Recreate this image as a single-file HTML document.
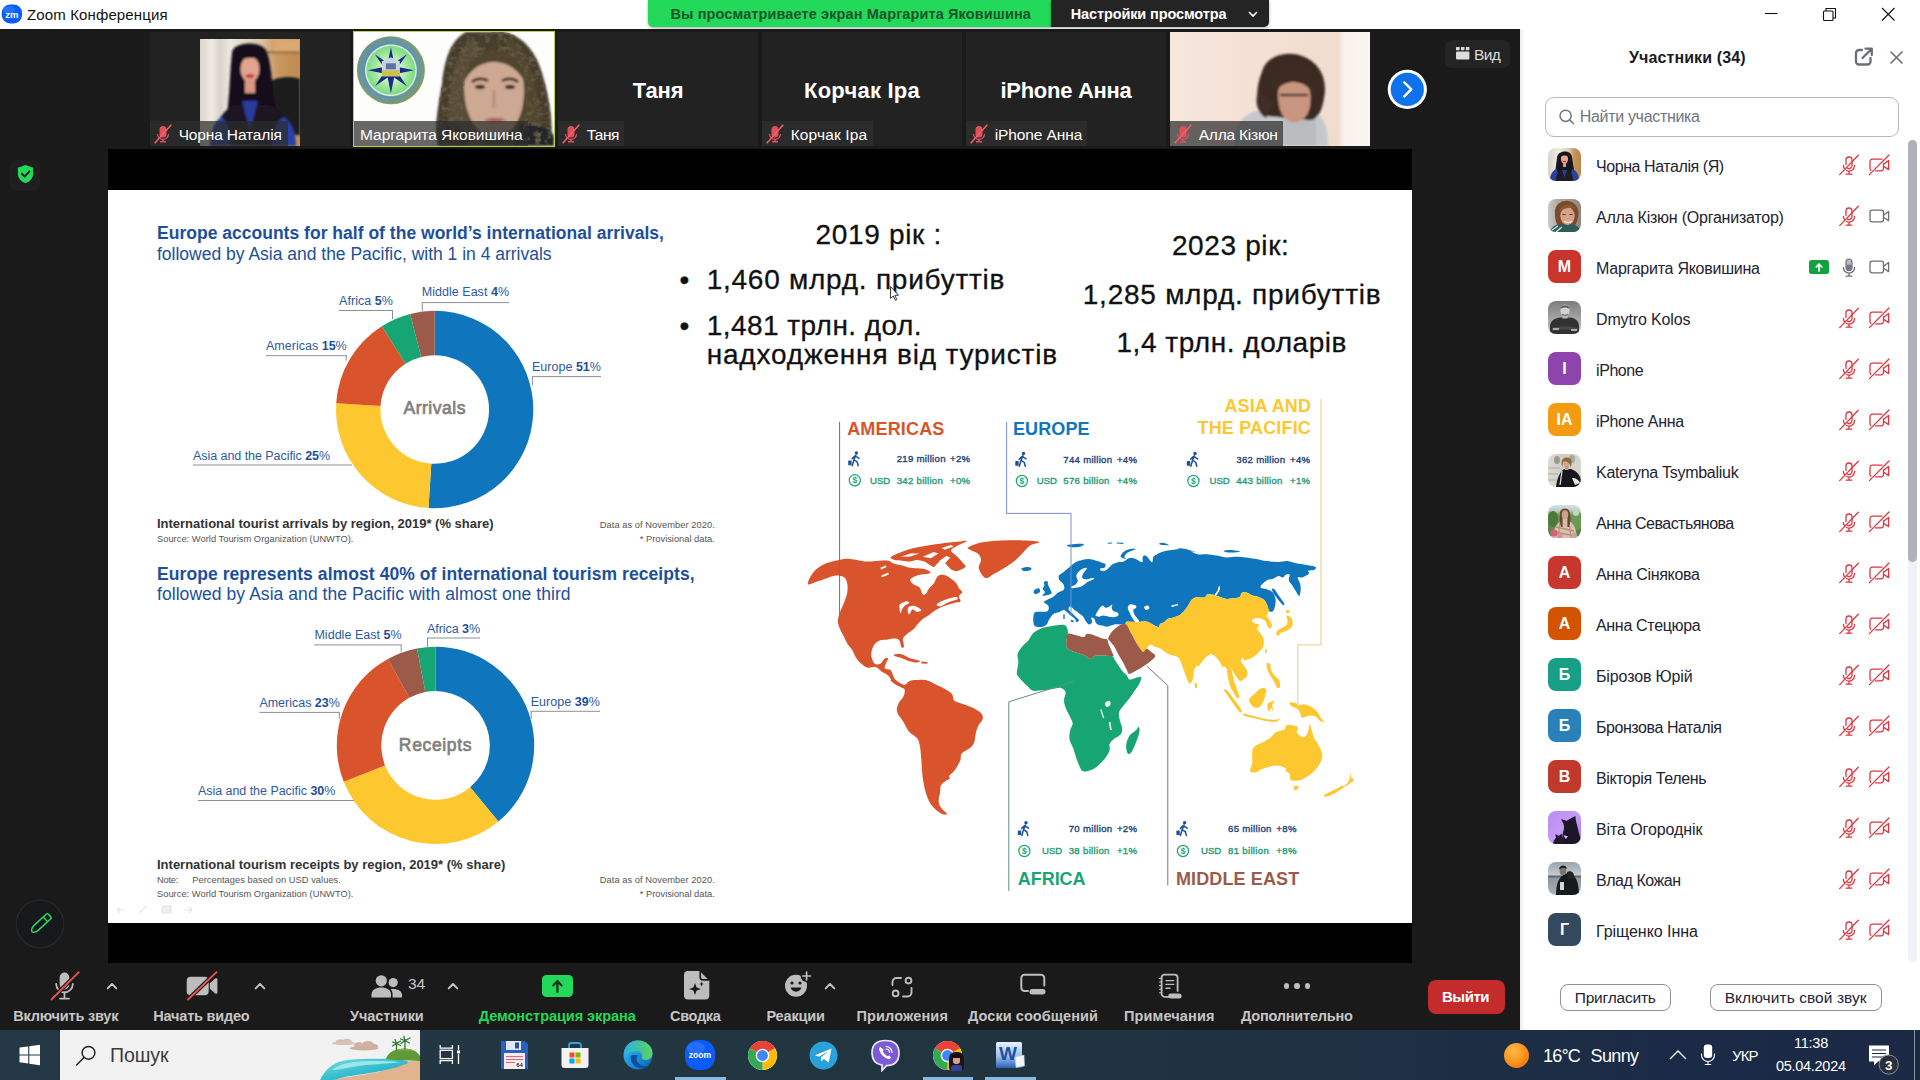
<!DOCTYPE html>
<html lang="ru"><head><meta charset="utf-8"><title>Zoom Конференция</title>
<style>
*{box-sizing:border-box;margin:0;padding:0}
html,body{width:1920px;height:1080px;overflow:hidden;background:#1a1a1a;font-family:"Liberation Sans",sans-serif;}
#root{position:relative;width:1920px;height:1080px;overflow:hidden}
#root div,#root svg{position:absolute}
.t{white-space:nowrap}
.tile{top:32px;height:114px;width:200px;background:#222;overflow:hidden}
.lbl{left:0;top:89px;height:25px;background:rgba(44,44,44,.72)}
.lbl.e{background:#2b2b2b}
.av{width:33px;height:33px;border-radius:8px;overflow:hidden;color:#fff;font-weight:bold;font-size:16px;line-height:33px;text-align:center}
</style></head><body><div id="root">
<div style="left:0px;top:0px;width:1920px;height:29px;background:#fff;"></div>
<div style="left:108px;top:149px;width:1304px;height:814px;background:#000;"></div>
<div style="left:108px;top:190px;width:1304px;height:733px;background:#fff;"></div>
<div style="left:0px;top:1030px;width:1920px;height:50px;background:linear-gradient(90deg,#233844 0%,#223642 30%,#203440 55%,#1e3043 72%,#1b2a46 88%,#1b2945 100%);"></div>
<div style="left:1520px;top:29px;width:400px;height:1001px;background:#fff;"></div>
<div style="left:1520px;top:29px;width:5px;height:1001px;background:linear-gradient(90deg,#ececec,#fff);"></div>
<svg style="left:1px;top:4px" width="22" height="20" viewBox="0 0 22 20"><rect x="0.7" y="0.5" width="20.4" height="19" rx="8.5" fill="#0b5cff"/><ellipse cx="8" cy="6" rx="6" ry="4" fill="#3f86ff" opacity=".5"/><text x="10.9" y="13.6" font-family="Liberation Sans,sans-serif" font-weight="bold" font-size="9.5" fill="#fff" text-anchor="middle">zm</text></svg>
<div class="t" style="left:27.0px;top:6.0px;font-size:15px;line-height:18px;color:#111;letter-spacing:0.130px;">Zoom Конференция</div>
<div style="left:648px;top:0px;width:403px;height:27px;background:#23d959;border-radius:0 0 0 5px;box-shadow:0 1px 3px rgba(0,0,0,.35)"></div>
<div style="left:1051px;top:0px;width:218px;height:27px;background:#242424;border-radius:0 0 5px 0;box-shadow:0 1px 3px rgba(0,0,0,.35)"></div>
<div class="t" style="left:670.5px;top:5.5px;font-size:14.5px;line-height:17px;color:#14552c;font-weight:bold;letter-spacing:0.110px;">Вы просматриваете экран Маргарита Яковишина</div>
<div class="t" style="left:1070.7px;top:5.5px;font-size:14.5px;line-height:17px;color:#fff;font-weight:bold;letter-spacing:-0.118px;">Настройки просмотра</div>
<svg style="left:1247px;top:9px" width="12" height="10" viewBox="0 0 12 10"><path d="M2 3 L6 7 L10 3" fill="none" stroke="#fff" stroke-width="1.6"/></svg>
<svg style="left:1760px;top:4px" width="140" height="22" viewBox="0 0 140 22"><g stroke="#111" stroke-width="1.1" fill="none"><path d="M5 9.5 H17.5"/><rect x="63.5" y="7" width="9.5" height="9.5" rx="1"/><path d="M66 7 V4.5 H75.5 V14 H73"/><path d="M122 4 L134.5 16.5 M134.5 4 L122 16.5"/></g></svg>
<div class="tile" style="left:150px;"><svg style="left:50px;top:7px" width="100" height="107" viewBox="0 0 100 107"><defs><filter id="b1" x="-5%" y="-5%" width="110%" height="110%"><feGaussianBlur stdDeviation="0.9"/></filter><linearGradient id="p1bg" x1="0" x2="1" y1="0" y2="0"><stop offset="0" stop-color="#dcd6cc"/><stop offset=".12" stop-color="#efebe4"/><stop offset=".2" stop-color="#d9d3c8"/><stop offset=".3" stop-color="#ece8e0"/><stop offset=".42" stop-color="#e2dacb"/><stop offset=".62" stop-color="#d9c0a0"/><stop offset=".78" stop-color="#c89860"/><stop offset="1" stop-color="#c08c52"/></linearGradient></defs><rect width="100" height="107" fill="url(#p1bg)"/><g filter="url(#b1)"><rect x="74" y="0" width="26" height="12" fill="#d9a873"/><rect x="62" y="12" width="38" height="3" fill="#a87a48"/><path d="M68 44 C74 38 92 36 100 40 V96 H70Z" fill="#1c1a1a"/><path d="M32 14 C32 2 66 0 68 16 C72 30 72 50 76 70 C78 84 70 92 60 92 H40 C28 92 26 80 28 66 C30 48 30 30 32 14Z" fill="#15111a"/><path d="M14 107 C14 84 22 72 34 66 H68 C82 70 92 84 94 107Z" fill="#1b1820"/><path d="M10 107 C10 92 14 82 22 78 C28 84 30 96 30 107Z M72 107 C72 94 76 82 84 78 C92 84 96 94 96 107Z" fill="#2b3fa6"/><path d="M42 62 L50 92 L58 62Z" fill="#2a3a9e"/><ellipse cx="50" cy="30" rx="9.5" ry="13" fill="#e0a48f"/><rect x="45" y="40" width="10" height="14" fill="#d69883"/><path d="M38 22 C42 10 58 10 62 22 C56 18 44 18 38 22Z" fill="#120e14"/><ellipse cx="50" cy="37" rx="4.5" ry="1.8" fill="#c4203a"/></g></svg><div class="lbl" style="width:138px"></div><svg style="left:2px;top:91px" width="22" height="22" viewBox="0 0 22 22"><rect x="7.500" y="3" width="7" height="11.500" rx="3.500" fill="#e0505a"/><path d="M5.500 11 a5.500 5.500 0 0 0 11 0" fill="none" stroke="#e0505a" stroke-width="1.300"/><path d="M11 16.500 V18.500 M8 18.800 H14" stroke="#e0505a" stroke-width="1.400"/><path d="M19.300 1.700 L2.700 20.300" stroke="#f0606a" stroke-width="1.500"/></svg><div class="t" style="left:28.7px;top:92.9px;font-size:15.5px;line-height:19px;color:#fff;letter-spacing:-0.151px;">Чорна Наталія</div></div>
<div class="tile" style="left:354px;outline:2px solid #b8d433;outline-offset:-1px;"><svg style="left:0;top:0" width="200" height="114" viewBox="0 0 200 114"><defs><filter id="b2" x="-5%" y="-5%" width="110%" height="110%"><feGaussianBlur stdDeviation="1.1"/></filter><filter id="b2s" x="-5%" y="-5%" width="110%" height="110%"><feGaussianBlur stdDeviation="0.5"/></filter><filter id="nz2" x="0" y="0" width="100%" height="100%"><feTurbulence type="fractalNoise" baseFrequency="0.16 0.2" numOctaves="2" seed="7" result="n"/><feColorMatrix in="n" type="matrix" values="0 0 0 0 0.12  0 0 0 0 0.1  0 0 0 0 0.06  0 0 0 -3.2 1.75"/><feComposite in2="SourceGraphic" operator="in"/></filter><radialGradient id="lg2"><stop offset="0" stop-color="#ffffff"/><stop offset=".25" stop-color="#d9f7cf"/><stop offset=".5" stop-color="#9fe89a"/><stop offset=".7" stop-color="#7fdc86"/><stop offset=".74" stop-color="#e8f4e0"/><stop offset=".78" stop-color="#5f93b0"/><stop offset=".9" stop-color="#6a97a8"/><stop offset=".96" stop-color="#7d9a62"/><stop offset="1" stop-color="#9aa878"/></radialGradient><linearGradient id="lg2b" x1="0" y1="0" x2="1" y2="1"><stop offset="0" stop-color="#4a7ec0" stop-opacity=".55"/><stop offset=".5" stop-color="#6a9a80" stop-opacity="0"/><stop offset="1" stop-color="#8a9a3a" stop-opacity=".55"/></linearGradient></defs><rect width="200" height="114" fill="#fdfdfc"/><g filter="url(#b2s)"><circle cx="36.900" cy="38.300" r="34" fill="url(#lg2)"/><path d="M36.900 4.300 a34 34 0 1 0 0.010 0Z M36.900 12.300 a26 26 0 1 1 -0.010 0Z" fill="url(#lg2b)" fill-rule="evenodd"/><g transform="translate(36.900 38.300)" fill="#1a2a8c"><path d="M0 -23 L3.500 -6 L0 0 L-3.500 -6Z M0 23 L3.500 6 L0 0 L-3.500 6Z M-23 0 L-6 -3.500 L0 0 L-6 3.500Z M23 0 L6 -3.500 L0 0 L6 3.500Z"/><path d="M-16 -16 L-1.500 -6 L-6 -1.500Z M16 -16 L1.500 -6 L6 -1.500Z M-16 16 L-1.500 6 L-6 1.500Z M16 16 L1.500 6 L6 1.500Z"/><path d="M-9 -9 L0 -13 L9 -9 L9 6 L-9 6Z" fill="#c8d4e0"/><rect x="-9" y="0" width="18" height="6" fill="#c9c44a"/><rect x="-5" y="-7" width="10" height="6" fill="#5a72a8"/></g></g><g filter="url(#b2)"><path d="M112 0 C96 8 90 30 88 52 C84 74 80 96 84 114 H196 C200 96 196 70 190 48 C184 22 170 4 150 0Z" fill="#463c2c"/><path d="M120 6 C104 16 98 40 96 60 C94 82 92 100 96 114 H130 V30Z" fill="#5a4e38"/><path d="M150 6 C170 12 178 36 182 58 C186 80 190 100 186 114 H158 V30Z" fill="#51462f"/><path d="M110 54 C110 30 124 22 140 22 C158 22 170 34 170 58 C170 84 160 104 140 106 C122 104 110 82 110 54Z" fill="#cda893"/><path d="M110 50 C112 28 126 18 142 18 C158 18 170 30 172 52 C164 36 152 30 140 30 C126 30 116 38 110 50Z" fill="#51452f"/><path d="M118 50 C122 46 130 46 134 49 M148 49 C152 46 160 46 164 50" stroke="#3d2f27" stroke-width="2.600" fill="none"/><ellipse cx="126" cy="55" rx="5" ry="2.200" fill="#3a2d28"/><ellipse cx="156" cy="55" rx="5" ry="2.200" fill="#3a2d28"/><path d="M140 58 V76" stroke="#b98f7c" stroke-width="3"/><path d="M130 88 C136 85 146 85 152 88 C146 91 136 91 130 88Z" fill="#a8625c"/><path d="M166 92 C180 90 196 96 200 104 V114 H160Z" fill="#23252c"/><path d="M90 96 C100 90 112 96 116 114 H86Z" fill="#3e3528"/></g><path filter="url(#nz2)" d="M112 0 C96 8 90 30 88 52 C84 74 80 96 84 114 H112 C108 90 108 60 112 44 C118 26 130 20 142 20 C158 20 168 30 172 50 C174 70 170 96 164 114 H196 C200 96 196 70 190 48 C184 22 170 4 150 0Z" fill="#000"/></svg><div class="lbl" style="width:174px"></div><div class="t" style="left:6.0px;top:92.9px;font-size:15.5px;line-height:19px;color:#fff;letter-spacing:-0.038px;">Маргарита Яковишина</div></div>
<div class="tile" style="left:558px;"><div class="t" style="left:74.8px;top:45.5px;font-size:22px;line-height:26px;color:#fff;font-weight:bold;letter-spacing:-0.188px;">Таня</div><div class="lbl e" style="width:66px"></div><svg style="left:2px;top:91px" width="22" height="22" viewBox="0 0 22 22"><rect x="7.500" y="3" width="7" height="11.500" rx="3.500" fill="#e0505a"/><path d="M5.500 11 a5.500 5.500 0 0 0 11 0" fill="none" stroke="#e0505a" stroke-width="1.300"/><path d="M11 16.500 V18.500 M8 18.800 H14" stroke="#e0505a" stroke-width="1.400"/><path d="M19.300 1.700 L2.700 20.300" stroke="#f0606a" stroke-width="1.500"/></svg><div class="t" style="left:28.7px;top:92.9px;font-size:15.5px;line-height:19px;color:#fff;letter-spacing:-0.586px;">Таня</div></div>
<div class="tile" style="left:762px;"><div class="t" style="left:42.0px;top:45.5px;font-size:22px;line-height:26px;color:#fff;font-weight:bold;letter-spacing:0.232px;">Корчак Іра</div><div class="lbl e" style="width:110.5px"></div><svg style="left:2px;top:91px" width="22" height="22" viewBox="0 0 22 22"><rect x="7.500" y="3" width="7" height="11.500" rx="3.500" fill="#e0505a"/><path d="M5.500 11 a5.500 5.500 0 0 0 11 0" fill="none" stroke="#e0505a" stroke-width="1.300"/><path d="M11 16.500 V18.500 M8 18.800 H14" stroke="#e0505a" stroke-width="1.400"/><path d="M19.300 1.700 L2.700 20.300" stroke="#f0606a" stroke-width="1.500"/></svg><div class="t" style="left:28.7px;top:92.9px;font-size:15.5px;line-height:19px;color:#fff;letter-spacing:0.124px;">Корчак Іра</div></div>
<div class="tile" style="left:966px;"><div class="t" style="left:34.5px;top:45.5px;font-size:22px;line-height:26px;color:#fff;font-weight:bold;letter-spacing:-0.286px;">iPhone Анна</div><div class="lbl e" style="width:120.5px"></div><svg style="left:2px;top:91px" width="22" height="22" viewBox="0 0 22 22"><rect x="7.500" y="3" width="7" height="11.500" rx="3.500" fill="#e0505a"/><path d="M5.500 11 a5.500 5.500 0 0 0 11 0" fill="none" stroke="#e0505a" stroke-width="1.300"/><path d="M11 16.500 V18.500 M8 18.800 H14" stroke="#e0505a" stroke-width="1.400"/><path d="M19.300 1.700 L2.700 20.300" stroke="#f0606a" stroke-width="1.500"/></svg><div class="t" style="left:28.7px;top:92.9px;font-size:15.5px;line-height:19px;color:#fff;letter-spacing:-0.104px;">iPhone Анна</div></div>
<div class="tile" style="left:1170px;"><svg style="left:0;top:0" width="200" height="114" viewBox="0 0 200 114"><defs><filter id="b6" x="-5%" y="-5%" width="110%" height="110%"><feGaussianBlur stdDeviation="1.2"/></filter><linearGradient id="p6bg" x1="0" x2="1" y1="0" y2="0"><stop offset="0" stop-color="#f6e6dc"/><stop offset=".5" stop-color="#f3e0d4"/><stop offset=".84" stop-color="#f0dccf"/><stop offset=".87" stop-color="#f9f1eb"/><stop offset="1" stop-color="#fbf6f2"/></linearGradient></defs><rect width="200" height="114" fill="url(#p6bg)"/><g filter="url(#b6)"><path d="M64 114 C64 92 74 80 92 78 H140 C154 82 158 96 158 114Z" fill="#c6c9cb"/><path d="M112 86 H146 V114 H112Z" fill="#babdc0"/><path d="M92 40 C96 24 116 18 132 24 C150 30 158 48 154 66 C152 80 146 90 138 88 L96 84 C84 74 86 54 92 40Z" fill="#3a2a22"/><path d="M108 62 C108 50 118 46 128 48 C140 50 142 62 140 74 C138 86 130 92 122 90 C112 88 108 76 108 62Z" fill="#c9957f"/><path d="M100 44 C108 30 130 28 142 40 C148 50 146 58 142 60 C134 48 118 46 106 58 C100 56 98 50 100 44Z" fill="#3d2c24"/><path d="M110 63 H138" stroke="#4a3530" stroke-width="2.400"/><path d="M88 60 C84 70 88 82 96 86 L104 70Z" fill="#402e26"/></g></svg><div class="lbl" style="width:112.5px"></div><svg style="left:2px;top:91px" width="22" height="22" viewBox="0 0 22 22"><rect x="7.500" y="3" width="7" height="11.500" rx="3.500" fill="#e0505a"/><path d="M5.500 11 a5.500 5.500 0 0 0 11 0" fill="none" stroke="#e0505a" stroke-width="1.300"/><path d="M11 16.500 V18.500 M8 18.800 H14" stroke="#e0505a" stroke-width="1.400"/><path d="M19.300 1.700 L2.700 20.300" stroke="#f0606a" stroke-width="1.500"/></svg><div class="t" style="left:28.7px;top:92.9px;font-size:15.5px;line-height:19px;color:#fff;letter-spacing:-0.212px;">Алла Кізюн</div></div>
<svg style="left:1386px;top:68px" width="42" height="42" viewBox="0 0 42 42"><circle cx="21.3" cy="21.4" r="19.6" fill="#fff"/><circle cx="21.3" cy="21.4" r="16.6" fill="#0e72ed"/><path d="M18.3 14.4 L25.3 21.4 L18.3 28.4" fill="none" stroke="#fff" stroke-width="2.4" stroke-linecap="round" stroke-linejoin="round"/></svg>
<div style="left:1445px;top:39.5px;width:65px;height:28.5px;background:#242424;border-radius:7px"></div>
<svg style="left:1456px;top:46px" width="14" height="14" viewBox="0 0 14 14"><g fill="#ddd"><rect x="0" y="1" width="3.6" height="3.2" rx=".6"/><rect x="4.9" y="1" width="3.6" height="3.2" rx=".6"/><rect x="9.8" y="1" width="3.6" height="3.2" rx=".6"/><rect x="0" y="5.4" width="13.4" height="8" rx="1"/></g></svg>
<div class="t" style="left:1474.0px;top:44.5px;font-size:15.5px;line-height:19px;color:#ddd;letter-spacing:-0.680px;">Вид</div>
<div style="left:10px;top:160px;width:30px;height:31px;background:#1f1f1f;border-radius:7px"></div>
<svg style="left:15.500px;top:164px" width="19" height="20" viewBox="0 0 19 21"><path d="M9.5 1 L17.5 4 V10.5 C17.5 15 14 18.5 9.5 20 C5 18.5 1.5 15 1.5 10.5 V4 Z" fill="#23d959"/><path d="M5.8 10.3 L8.6 13.2 L13.6 7.8" fill="none" stroke="#1a1a1a" stroke-width="2" stroke-linecap="round" stroke-linejoin="round"/></svg>
<svg style="left:14px;top:898px" width="52" height="52" viewBox="0 0 52 52"><circle cx="26" cy="26" r="23.700" fill="#17181b" stroke="#27292c" stroke-width="1.100"/><g transform="translate(26.700 25.700) rotate(47.400)" fill="none" stroke="#2bd964" stroke-width="1.500" stroke-linejoin="round"><path d="M-2 -12 H2 a1.200 1.200 0 0 1 1.200 1.200 V6 C3.200 9.500 1.200 11.800 0 11.800 C-1.200 11.800 -3.200 9.500 -3.200 6 V-10.800 a1.200 1.200 0 0 1 1.200 -1.200Z"/><path d="M-3.200 -6.400 H3.200"/></g></svg>
<div class="t" style="left:1629.0px;top:48.1px;font-size:16px;line-height:19px;color:#1b1b26;font-weight:bold;letter-spacing:0.106px;">Участники (34)</div>
<svg style="left:1853px;top:46px" width="54" height="22" viewBox="0 0 54 22"><g fill="none" stroke="#696e76" stroke-width="2.300" stroke-linecap="round" stroke-linejoin="round"><path d="M9 4 H6 a3 3 0 0 0 -3 3 V15.5 a3 3 0 0 0 3 3 H14.5 a3 3 0 0 0 3 -3 V12"/><path d="M12.5 2.6 H18.8 V8.9 M18.5 3 L9.5 12"/></g><path d="M37.5 5.5 L49.5 17.5 M49.5 5.5 L37.5 17.5" stroke="#6a6a74" stroke-width="1.5" fill="none"/></svg>
<div style="left:1544.5px;top:97px;width:354.5px;height:40px;background:#fff;border:1.3px solid #b4b7c6;border-radius:9px"></div>
<svg style="left:1558px;top:108px" width="18" height="18" viewBox="0 0 18 18"><circle cx="7.6" cy="7.8" r="5.6" fill="none" stroke="#6e7680" stroke-width="1.5"/><path d="M11.8 12 L15.6 15.8" stroke="#6e7680" stroke-width="1.5" stroke-linecap="round"/></svg>
<div class="t" style="left:1579.7px;top:107.2px;font-size:16px;line-height:19px;color:#6e7680;letter-spacing:-0.312px;">Найти участника</div>
<div style="left:1907.5px;top:140px;width:9.2px;height:822px;background:#f1f1f8;border-radius:5px"></div>
<div style="left:1907.5px;top:140px;width:9.2px;height:422px;background:#b1b1ba;border-radius:5px"></div>
<div class="av" style="left:1548px;top:148px"><svg style="left:0;top:0" width="33" height="33" viewBox="0 0 33 33"><defs><filter id="fp1" x="-10%" y="-10%" width="120%" height="120%"><feGaussianBlur stdDeviation="0.55"/></filter></defs><defs><linearGradient id="ap1" x1="0" x2="1" y1="0" y2="0"><stop offset="0" stop-color="#d8d2c8"/><stop offset=".3" stop-color="#efece6"/><stop offset=".6" stop-color="#e0d2be"/><stop offset=".8" stop-color="#c49558"/><stop offset="1" stop-color="#b88748"/></linearGradient></defs><rect width="33" height="33" fill="url(#ap1)"/><g filter="url(#fp1)"><path d="M9 10 C9 2 23 1 24 9 C25 16 26 22 27 28 L24 33 H8 L6 28 C8 22 8 16 9 10Z" fill="#17121a"/><path d="M2 33 C2 26 5 22 9 21 L12 33Z M31 33 C31 26 28 22 24 21 L21 33Z" fill="#2c3f9f"/><path d="M8 33 C8 27 10 23 13 22 H20 C23 23 25 27 25 33Z" fill="#1d1a24"/><path d="M14 22 L16.500 30 L19 22Z" fill="#2a3a98"/><ellipse cx="16.500" cy="11" rx="3.600" ry="4.800" fill="#e2a690"/><rect x="15" y="15" width="3" height="4" fill="#d89a84"/><path d="M12 9 C13 4 20 4 21 9 C19 7 14 7 12 9Z" fill="#120e14"/><ellipse cx="16.500" cy="13.400" rx="1.700" ry=".7" fill="#c4203a"/></g></svg></div>
<div class="t" style="left:1596.0px;top:156.5px;font-size:16px;line-height:19px;color:#232333;letter-spacing:-0.429px;">Чорна Наталія (Я)</div>
<svg style="left:1838px;top:154px" width="22" height="22" viewBox="-11 -11 22 22"><g fill="none" stroke="#e0353f" stroke-width="1.3" stroke-linecap="round"><path d="M-3 -0.5 V-5 a3 3 0 0 1 6 0 V0.5 a3 3 0 0 1 -4.5 2.6"/><path d="M-5.6 0.5 a5.6 5.6 0 0 0 1.6 3.6 M5.6 0.5 a5.6 5.6 0 0 1 -8 5"/><path d="M0 6.3 V9 M-2.8 9.2 H2.8"/><path d="M9.3 -9.8 L-9.3 9.6"/></g></svg>
<svg style="left:1867px;top:154px" width="24" height="22" viewBox="-12 -11 24 22"><g fill="none" stroke="#e0353f" stroke-width="1.3" stroke-linejoin="round" stroke-linecap="round"><path d="M3 -5.8 H-6.8 a2.2 2.2 0 0 0 -2.2 2.2 V3.6 a2.2 2.2 0 0 0 0.8 1.7 M-3.5 5.8 H2.3 a2.2 2.2 0 0 0 2.2 -2.2 V-1"/><path d="M4.6 -0.8 L9.6 -4.6 V4.6 L4.6 1.2"/><path d="M10 -10 L-9.6 9.6"/></g></svg>
<div class="av" style="left:1548px;top:199px"><svg style="left:0;top:0" width="33" height="33" viewBox="0 0 33 33"><defs><filter id="fp2" x="-10%" y="-10%" width="120%" height="120%"><feGaussianBlur stdDeviation="0.6"/></filter></defs><defs><linearGradient id="ap2" x1="0" x2="1" y1="0" y2="0"><stop offset="0" stop-color="#c9c9c7"/><stop offset=".4" stop-color="#a9a49c"/><stop offset="1" stop-color="#8c857a"/></linearGradient></defs><rect width="33" height="33" fill="url(#ap2)"/><g filter="url(#fp2)"><path d="M7 14 C6 6 14 1 20 2 C28 3 32 10 30 18 C29 24 27 27 24 28 H11 C8 25 7 20 7 14Z" fill="#7a4c2a"/><path d="M2 33 C3 28 8 25 13 25 H24 C29 26 32 29 33 33Z" fill="#2f5a58"/><path d="M4 31 L10 27 M8 33 L14 28" stroke="#e8efee" stroke-width="1.200"/><ellipse cx="19.500" cy="17" rx="7.200" ry="9" fill="#d9a286"/><path d="M11 13 C12 5 24 3 28 10 C24 8 17 8 11 13Z" fill="#8a5a30"/><path d="M16 22 C18 24 22 24 24 22" stroke="#f4ece6" stroke-width="1.200" fill="none"/><path d="M14.500 15.500 H17.500 M21.500 15.500 H24.500" stroke="#4a3020" stroke-width="1"/></g></svg></div>
<div class="t" style="left:1596.0px;top:207.5px;font-size:16px;line-height:19px;color:#232333;letter-spacing:-0.228px;">Алла Кізюн (Организатор)</div>
<svg style="left:1838px;top:205px" width="22" height="22" viewBox="-11 -11 22 22"><g fill="none" stroke="#e0353f" stroke-width="1.3" stroke-linecap="round"><path d="M-3 -0.5 V-5 a3 3 0 0 1 6 0 V0.5 a3 3 0 0 1 -4.5 2.6"/><path d="M-5.6 0.5 a5.6 5.6 0 0 0 1.6 3.6 M5.6 0.5 a5.6 5.6 0 0 1 -8 5"/><path d="M0 6.3 V9 M-2.8 9.2 H2.8"/><path d="M9.3 -9.8 L-9.3 9.6"/></g></svg>
<svg style="left:1867px;top:205px" width="24" height="22" viewBox="-12 -11 24 22"><g fill="none" stroke="#6e6e7a" stroke-width="1.3" stroke-linejoin="round"><rect x="-9" y="-5.8" width="13.5" height="11.6" rx="2.2"/><path d="M4.6 -0.8 L9.6 -4.6 V4.6 L4.6 1.2"/></g></svg>
<div class="av" style="left:1548px;top:250px;background:#c9352b">M</div>
<div class="t" style="left:1596.0px;top:258.5px;font-size:16px;line-height:19px;color:#232333;letter-spacing:-0.263px;">Маргарита Яковишина</div>
<svg style="left:1838px;top:256px" width="22" height="22" viewBox="-11 -11 22 22"><rect x="-3" y="-8" width="6" height="11.6" rx="3" fill="#b9b9c2" stroke="#6e6e7a" stroke-width="1.2"/><rect x="-3" y="-2.6" width="6" height="6.2" rx="2.6" fill="#77778a"/><g fill="none" stroke="#6e6e7a" stroke-width="1.3" stroke-linecap="round"><path d="M-5.6 0.5 a5.6 5.6 0 0 0 11.2 0"/><path d="M0 6.3 V9 M-2.8 9.2 H2.8"/></g></svg>
<svg style="left:1867px;top:256px" width="24" height="22" viewBox="-12 -11 24 22"><g fill="none" stroke="#6e6e7a" stroke-width="1.3" stroke-linejoin="round"><rect x="-9" y="-5.8" width="13.5" height="11.6" rx="2.2"/><path d="M4.6 -0.8 L9.6 -4.6 V4.6 L4.6 1.2"/></g></svg>
<div class="av" style="left:1548px;top:301px"><svg style="left:0;top:0" width="33" height="33" viewBox="0 0 33 33"><defs><filter id="fp4" x="-10%" y="-10%" width="120%" height="120%"><feGaussianBlur stdDeviation="0.55"/></filter></defs><defs><linearGradient id="ap4" x1="0" x2="0" y1="0" y2="1"><stop offset="0" stop-color="#7d7d7d"/><stop offset=".6" stop-color="#a9a9a9"/><stop offset="1" stop-color="#c2c2c2"/></linearGradient></defs><rect width="33" height="33" fill="url(#ap4)"/><g filter="url(#fp4)"><path d="M2 33 V24 C3 19 8 17 12 16.500 H22 C27 17 31 20 31 25 V33Z" fill="#333"/><path d="M4 27 C10 25 24 25 30 27 V30 C24 28 10 28 4 30Z" fill="#4a4a4a"/><path d="M5 28 H11 M23 29 H29" stroke="#cfcfcf" stroke-width="1.600"/><ellipse cx="17" cy="9.500" rx="4.600" ry="6" fill="#d2d2d2"/><rect x="14.500" y="14" width="5" height="3.500" fill="#bdbdbd"/><path d="M12.500 8 C13 3 21 3 21.500 8 C19 6 15 6 12.500 8Z" fill="#5a5a5a"/><path d="M14 13 C16 15 18 15 20 13" stroke="#777" stroke-width="1.400" fill="none"/></g></svg></div>
<div class="t" style="left:1596.0px;top:309.5px;font-size:16px;line-height:19px;color:#232333;letter-spacing:-0.135px;">Dmytro Kolos</div>
<svg style="left:1838px;top:307px" width="22" height="22" viewBox="-11 -11 22 22"><g fill="none" stroke="#e0353f" stroke-width="1.3" stroke-linecap="round"><path d="M-3 -0.5 V-5 a3 3 0 0 1 6 0 V0.5 a3 3 0 0 1 -4.5 2.6"/><path d="M-5.6 0.5 a5.6 5.6 0 0 0 1.6 3.6 M5.6 0.5 a5.6 5.6 0 0 1 -8 5"/><path d="M0 6.3 V9 M-2.8 9.2 H2.8"/><path d="M9.3 -9.8 L-9.3 9.6"/></g></svg>
<svg style="left:1867px;top:307px" width="24" height="22" viewBox="-12 -11 24 22"><g fill="none" stroke="#e0353f" stroke-width="1.3" stroke-linejoin="round" stroke-linecap="round"><path d="M3 -5.8 H-6.8 a2.2 2.2 0 0 0 -2.2 2.2 V3.6 a2.2 2.2 0 0 0 0.8 1.7 M-3.5 5.8 H2.3 a2.2 2.2 0 0 0 2.2 -2.2 V-1"/><path d="M4.6 -0.8 L9.6 -4.6 V4.6 L4.6 1.2"/><path d="M10 -10 L-9.6 9.6"/></g></svg>
<div class="av" style="left:1548px;top:352px;background:#8e44ad">I</div>
<div class="t" style="left:1596.0px;top:360.5px;font-size:16px;line-height:19px;color:#232333;letter-spacing:-0.420px;">iPhone</div>
<svg style="left:1838px;top:358px" width="22" height="22" viewBox="-11 -11 22 22"><g fill="none" stroke="#e0353f" stroke-width="1.3" stroke-linecap="round"><path d="M-3 -0.5 V-5 a3 3 0 0 1 6 0 V0.5 a3 3 0 0 1 -4.5 2.6"/><path d="M-5.6 0.5 a5.6 5.6 0 0 0 1.6 3.6 M5.6 0.5 a5.6 5.6 0 0 1 -8 5"/><path d="M0 6.3 V9 M-2.8 9.2 H2.8"/><path d="M9.3 -9.8 L-9.3 9.6"/></g></svg>
<svg style="left:1867px;top:358px" width="24" height="22" viewBox="-12 -11 24 22"><g fill="none" stroke="#e0353f" stroke-width="1.3" stroke-linejoin="round" stroke-linecap="round"><path d="M3 -5.8 H-6.8 a2.2 2.2 0 0 0 -2.2 2.2 V3.6 a2.2 2.2 0 0 0 0.8 1.7 M-3.5 5.8 H2.3 a2.2 2.2 0 0 0 2.2 -2.2 V-1"/><path d="M4.6 -0.8 L9.6 -4.6 V4.6 L4.6 1.2"/><path d="M10 -10 L-9.6 9.6"/></g></svg>
<div class="av" style="left:1548px;top:403px;background:#f39c12">IA</div>
<div class="t" style="left:1596.0px;top:411.5px;font-size:16px;line-height:19px;color:#232333;letter-spacing:-0.346px;">iPhone Анна</div>
<svg style="left:1838px;top:409px" width="22" height="22" viewBox="-11 -11 22 22"><g fill="none" stroke="#e0353f" stroke-width="1.3" stroke-linecap="round"><path d="M-3 -0.5 V-5 a3 3 0 0 1 6 0 V0.5 a3 3 0 0 1 -4.5 2.6"/><path d="M-5.6 0.5 a5.6 5.6 0 0 0 1.6 3.6 M5.6 0.5 a5.6 5.6 0 0 1 -8 5"/><path d="M0 6.3 V9 M-2.8 9.2 H2.8"/><path d="M9.3 -9.8 L-9.3 9.6"/></g></svg>
<svg style="left:1867px;top:409px" width="24" height="22" viewBox="-12 -11 24 22"><g fill="none" stroke="#e0353f" stroke-width="1.3" stroke-linejoin="round" stroke-linecap="round"><path d="M3 -5.8 H-6.8 a2.2 2.2 0 0 0 -2.2 2.2 V3.6 a2.2 2.2 0 0 0 0.8 1.7 M-3.5 5.8 H2.3 a2.2 2.2 0 0 0 2.2 -2.2 V-1"/><path d="M4.6 -0.8 L9.6 -4.6 V4.6 L4.6 1.2"/><path d="M10 -10 L-9.6 9.6"/></g></svg>
<div class="av" style="left:1548px;top:454px"><svg style="left:0;top:0" width="33" height="33" viewBox="0 0 33 33"><defs><filter id="fp7" x="-10%" y="-10%" width="120%" height="120%"><feGaussianBlur stdDeviation="0.55"/></filter></defs><defs><linearGradient id="ap7" x1="0" x2="1" y1="0" y2="0"><stop offset="0" stop-color="#dedad2"/><stop offset=".5" stop-color="#cfccc4"/><stop offset="1" stop-color="#d9d6d0"/></linearGradient></defs><rect width="33" height="33" fill="url(#ap7)"/><g filter="url(#fp7)"><ellipse cx="9" cy="6" rx="3" ry="4" fill="#9a9a92"/><ellipse cx="24" cy="5" rx="3" ry="4" fill="#a8a8a0"/><path d="M0 14 H12 M0 20 H10 M0 26 H9" stroke="#bdb9b0" stroke-width="1.400"/><path d="M8 33 C9 24 12 18 16 15 H23 C29 17 33 22 33 28 V33Z" fill="#15161a"/><path d="M24 24 C28 24 31 26 32 29 L27 31Z" fill="#e8e6e2"/><path d="M14 17 L12 31" stroke="#dcdad6" stroke-width="1.300"/><ellipse cx="18.500" cy="8.500" rx="3.600" ry="4.600" fill="#d0a888"/><rect x="17" y="12" width="3.500" height="4" fill="#c49c7c"/><path d="M13.500 9 C13 3 22 1 23.500 7 C24 10 23 12 22.500 13 C22 8 17 6 15 8 C14.500 10 14.500 12 14.500 13 C13.800 12 13.500 10 13.500 9Z" fill="#8a6a44"/></g></svg></div>
<div class="t" style="left:1596.0px;top:462.5px;font-size:16px;line-height:19px;color:#232333;letter-spacing:-0.254px;">Kateryna Tsymbaliuk</div>
<svg style="left:1838px;top:460px" width="22" height="22" viewBox="-11 -11 22 22"><g fill="none" stroke="#e0353f" stroke-width="1.3" stroke-linecap="round"><path d="M-3 -0.5 V-5 a3 3 0 0 1 6 0 V0.5 a3 3 0 0 1 -4.5 2.6"/><path d="M-5.6 0.5 a5.6 5.6 0 0 0 1.6 3.6 M5.6 0.5 a5.6 5.6 0 0 1 -8 5"/><path d="M0 6.3 V9 M-2.8 9.2 H2.8"/><path d="M9.3 -9.8 L-9.3 9.6"/></g></svg>
<svg style="left:1867px;top:460px" width="24" height="22" viewBox="-12 -11 24 22"><g fill="none" stroke="#e0353f" stroke-width="1.3" stroke-linejoin="round" stroke-linecap="round"><path d="M3 -5.8 H-6.8 a2.2 2.2 0 0 0 -2.2 2.2 V3.6 a2.2 2.2 0 0 0 0.8 1.7 M-3.5 5.8 H2.3 a2.2 2.2 0 0 0 2.2 -2.2 V-1"/><path d="M4.6 -0.8 L9.6 -4.6 V4.6 L4.6 1.2"/><path d="M10 -10 L-9.6 9.6"/></g></svg>
<div class="av" style="left:1548px;top:505px"><svg style="left:0;top:0" width="33" height="33" viewBox="0 0 33 33"><defs><filter id="fp8" x="-10%" y="-10%" width="120%" height="120%"><feGaussianBlur stdDeviation="0.6"/></filter></defs><defs><linearGradient id="ap8" x1="0" x2="0" y1="0" y2="1"><stop offset="0" stop-color="#d4e2ea"/><stop offset=".18" stop-color="#b9cdbf"/><stop offset=".3" stop-color="#6f9655"/><stop offset="1" stop-color="#557a40"/></linearGradient></defs><rect width="33" height="33" fill="url(#ap8)"/><g filter="url(#fp8)"><ellipse cx="5" cy="14" rx="5" ry="8" fill="#4a7a3a"/><ellipse cx="29" cy="16" rx="5" ry="9" fill="#6a9a54"/><ellipse cx="28" cy="8" rx="3" ry="3" fill="#c9d2c8"/><path d="M4 33 C5 24 9 18 13 16 H21 C26 18 28 24 29 33Z" fill="#d9c2ae"/><path d="M8 22 L26 26 M7 27 L27 31 M12 17 L10 33 M21 17 L23 33" stroke="#b8907a" stroke-width="1.300"/><path d="M12 9 C11 3 21 1 22 8 C23 14 22 19 21 22 H13 C12 19 11.500 14 12 9Z" fill="#6a4a30"/><path d="M14.600 12 H19.400 V22 H14.600Z" fill="#d6bca8"/><ellipse cx="17" cy="9.500" rx="3.200" ry="4.300" fill="#cfa288"/><circle cx="6" cy="28" r="3.500" fill="#d8607a"/><circle cx="12" cy="31" r="2.500" fill="#e28a9a"/><circle cx="26" cy="30" r="2.500" fill="#c9a0a8"/></g></svg></div>
<div class="t" style="left:1596.0px;top:513.5px;font-size:16px;line-height:19px;color:#232333;letter-spacing:-0.526px;">Анна Севастьянова</div>
<svg style="left:1838px;top:511px" width="22" height="22" viewBox="-11 -11 22 22"><g fill="none" stroke="#e0353f" stroke-width="1.3" stroke-linecap="round"><path d="M-3 -0.5 V-5 a3 3 0 0 1 6 0 V0.5 a3 3 0 0 1 -4.5 2.6"/><path d="M-5.6 0.5 a5.6 5.6 0 0 0 1.6 3.6 M5.6 0.5 a5.6 5.6 0 0 1 -8 5"/><path d="M0 6.3 V9 M-2.8 9.2 H2.8"/><path d="M9.3 -9.8 L-9.3 9.6"/></g></svg>
<svg style="left:1867px;top:511px" width="24" height="22" viewBox="-12 -11 24 22"><g fill="none" stroke="#e0353f" stroke-width="1.3" stroke-linejoin="round" stroke-linecap="round"><path d="M3 -5.8 H-6.8 a2.2 2.2 0 0 0 -2.2 2.2 V3.6 a2.2 2.2 0 0 0 0.8 1.7 M-3.5 5.8 H2.3 a2.2 2.2 0 0 0 2.2 -2.2 V-1"/><path d="M4.6 -0.8 L9.6 -4.6 V4.6 L4.6 1.2"/><path d="M10 -10 L-9.6 9.6"/></g></svg>
<div class="av" style="left:1548px;top:556px;background:#c8372d">А</div>
<div class="t" style="left:1596.0px;top:564.5px;font-size:16px;line-height:19px;color:#232333;letter-spacing:-0.307px;">Анна Сінякова</div>
<svg style="left:1838px;top:562px" width="22" height="22" viewBox="-11 -11 22 22"><g fill="none" stroke="#e0353f" stroke-width="1.3" stroke-linecap="round"><path d="M-3 -0.5 V-5 a3 3 0 0 1 6 0 V0.5 a3 3 0 0 1 -4.5 2.6"/><path d="M-5.6 0.5 a5.6 5.6 0 0 0 1.6 3.6 M5.6 0.5 a5.6 5.6 0 0 1 -8 5"/><path d="M0 6.3 V9 M-2.8 9.2 H2.8"/><path d="M9.3 -9.8 L-9.3 9.6"/></g></svg>
<svg style="left:1867px;top:562px" width="24" height="22" viewBox="-12 -11 24 22"><g fill="none" stroke="#e0353f" stroke-width="1.3" stroke-linejoin="round" stroke-linecap="round"><path d="M3 -5.8 H-6.8 a2.2 2.2 0 0 0 -2.2 2.2 V3.6 a2.2 2.2 0 0 0 0.8 1.7 M-3.5 5.8 H2.3 a2.2 2.2 0 0 0 2.2 -2.2 V-1"/><path d="M4.6 -0.8 L9.6 -4.6 V4.6 L4.6 1.2"/><path d="M10 -10 L-9.6 9.6"/></g></svg>
<div class="av" style="left:1548px;top:607px;background:#d35400">А</div>
<div class="t" style="left:1596.0px;top:615.5px;font-size:16px;line-height:19px;color:#232333;letter-spacing:-0.321px;">Анна Стецюра</div>
<svg style="left:1838px;top:613px" width="22" height="22" viewBox="-11 -11 22 22"><g fill="none" stroke="#e0353f" stroke-width="1.3" stroke-linecap="round"><path d="M-3 -0.5 V-5 a3 3 0 0 1 6 0 V0.5 a3 3 0 0 1 -4.5 2.6"/><path d="M-5.6 0.5 a5.6 5.6 0 0 0 1.6 3.6 M5.6 0.5 a5.6 5.6 0 0 1 -8 5"/><path d="M0 6.3 V9 M-2.8 9.2 H2.8"/><path d="M9.3 -9.8 L-9.3 9.6"/></g></svg>
<svg style="left:1867px;top:613px" width="24" height="22" viewBox="-12 -11 24 22"><g fill="none" stroke="#e0353f" stroke-width="1.3" stroke-linejoin="round" stroke-linecap="round"><path d="M3 -5.8 H-6.8 a2.2 2.2 0 0 0 -2.2 2.2 V3.6 a2.2 2.2 0 0 0 0.8 1.7 M-3.5 5.8 H2.3 a2.2 2.2 0 0 0 2.2 -2.2 V-1"/><path d="M4.6 -0.8 L9.6 -4.6 V4.6 L4.6 1.2"/><path d="M10 -10 L-9.6 9.6"/></g></svg>
<div class="av" style="left:1548px;top:658px;background:#17a085">Б</div>
<div class="t" style="left:1596.0px;top:666.5px;font-size:16px;line-height:19px;color:#232333;letter-spacing:-0.136px;">Бірозов Юрій</div>
<svg style="left:1838px;top:664px" width="22" height="22" viewBox="-11 -11 22 22"><g fill="none" stroke="#e0353f" stroke-width="1.3" stroke-linecap="round"><path d="M-3 -0.5 V-5 a3 3 0 0 1 6 0 V0.5 a3 3 0 0 1 -4.5 2.6"/><path d="M-5.6 0.5 a5.6 5.6 0 0 0 1.6 3.6 M5.6 0.5 a5.6 5.6 0 0 1 -8 5"/><path d="M0 6.3 V9 M-2.8 9.2 H2.8"/><path d="M9.3 -9.8 L-9.3 9.6"/></g></svg>
<svg style="left:1867px;top:664px" width="24" height="22" viewBox="-12 -11 24 22"><g fill="none" stroke="#e0353f" stroke-width="1.3" stroke-linejoin="round" stroke-linecap="round"><path d="M3 -5.8 H-6.8 a2.2 2.2 0 0 0 -2.2 2.2 V3.6 a2.2 2.2 0 0 0 0.8 1.7 M-3.5 5.8 H2.3 a2.2 2.2 0 0 0 2.2 -2.2 V-1"/><path d="M4.6 -0.8 L9.6 -4.6 V4.6 L4.6 1.2"/><path d="M10 -10 L-9.6 9.6"/></g></svg>
<div class="av" style="left:1548px;top:709px;background:#2a80b9">Б</div>
<div class="t" style="left:1596.0px;top:717.5px;font-size:16px;line-height:19px;color:#232333;letter-spacing:-0.441px;">Бронзова Наталія</div>
<svg style="left:1838px;top:715px" width="22" height="22" viewBox="-11 -11 22 22"><g fill="none" stroke="#e0353f" stroke-width="1.3" stroke-linecap="round"><path d="M-3 -0.5 V-5 a3 3 0 0 1 6 0 V0.5 a3 3 0 0 1 -4.5 2.6"/><path d="M-5.6 0.5 a5.6 5.6 0 0 0 1.6 3.6 M5.6 0.5 a5.6 5.6 0 0 1 -8 5"/><path d="M0 6.3 V9 M-2.8 9.2 H2.8"/><path d="M9.3 -9.8 L-9.3 9.6"/></g></svg>
<svg style="left:1867px;top:715px" width="24" height="22" viewBox="-12 -11 24 22"><g fill="none" stroke="#e0353f" stroke-width="1.3" stroke-linejoin="round" stroke-linecap="round"><path d="M3 -5.8 H-6.8 a2.2 2.2 0 0 0 -2.2 2.2 V3.6 a2.2 2.2 0 0 0 0.8 1.7 M-3.5 5.8 H2.3 a2.2 2.2 0 0 0 2.2 -2.2 V-1"/><path d="M4.6 -0.8 L9.6 -4.6 V4.6 L4.6 1.2"/><path d="M10 -10 L-9.6 9.6"/></g></svg>
<div class="av" style="left:1548px;top:760px;background:#c0392b">В</div>
<div class="t" style="left:1596.0px;top:768.5px;font-size:16px;line-height:19px;color:#232333;letter-spacing:-0.358px;">Вікторія Телень</div>
<svg style="left:1838px;top:766px" width="22" height="22" viewBox="-11 -11 22 22"><g fill="none" stroke="#e0353f" stroke-width="1.3" stroke-linecap="round"><path d="M-3 -0.5 V-5 a3 3 0 0 1 6 0 V0.5 a3 3 0 0 1 -4.5 2.6"/><path d="M-5.6 0.5 a5.6 5.6 0 0 0 1.6 3.6 M5.6 0.5 a5.6 5.6 0 0 1 -8 5"/><path d="M0 6.3 V9 M-2.8 9.2 H2.8"/><path d="M9.3 -9.8 L-9.3 9.6"/></g></svg>
<svg style="left:1867px;top:766px" width="24" height="22" viewBox="-12 -11 24 22"><g fill="none" stroke="#e0353f" stroke-width="1.3" stroke-linejoin="round" stroke-linecap="round"><path d="M3 -5.8 H-6.8 a2.2 2.2 0 0 0 -2.2 2.2 V3.6 a2.2 2.2 0 0 0 0.8 1.7 M-3.5 5.8 H2.3 a2.2 2.2 0 0 0 2.2 -2.2 V-1"/><path d="M4.6 -0.8 L9.6 -4.6 V4.6 L4.6 1.2"/><path d="M10 -10 L-9.6 9.6"/></g></svg>
<div class="av" style="left:1548px;top:811px"><svg style="left:0;top:0" width="33" height="33" viewBox="0 0 33 33"><defs><filter id="fp14" x="-10%" y="-10%" width="120%" height="120%"><feGaussianBlur stdDeviation="0.4"/></filter></defs><defs><linearGradient id="ap14" x1="0" x2="1" y1="0" y2="1"><stop offset="0" stop-color="#b88cf2"/><stop offset=".5" stop-color="#c79af6"/><stop offset="1" stop-color="#a77be8"/></linearGradient></defs><rect width="33" height="33" fill="url(#ap14)"/><g filter="url(#fp14)"><path d="M14.500 33 C14 27 14.500 22 16 18 C16.500 14 15 11 13 8.500 C15 8.500 17 9 18.500 10 C21 8 24 7 27.500 5 C27.500 8 28 10 28.500 12 C30 17 31 24 33 28 V33Z" fill="#1a1226"/><path d="M5 33 C5.500 30 6.500 28 8 27 C8 25.500 7.500 24 7 23 C8.500 23.500 9.500 24 10.500 24.800 C11.500 24.500 12.500 23.500 13.500 22.500 C14 24 14 25.500 14.500 27 C16 28 17 30 17 33Z" fill="#20172e"/><path d="M15.500 24 L17.500 28 L20 25.500Z" fill="#d8b8f4"/></g></svg></div>
<div class="t" style="left:1596.0px;top:819.5px;font-size:16px;line-height:19px;color:#232333;letter-spacing:-0.094px;">Віта Огороднік</div>
<svg style="left:1838px;top:817px" width="22" height="22" viewBox="-11 -11 22 22"><g fill="none" stroke="#e0353f" stroke-width="1.3" stroke-linecap="round"><path d="M-3 -0.5 V-5 a3 3 0 0 1 6 0 V0.5 a3 3 0 0 1 -4.5 2.6"/><path d="M-5.6 0.5 a5.6 5.6 0 0 0 1.6 3.6 M5.6 0.5 a5.6 5.6 0 0 1 -8 5"/><path d="M0 6.3 V9 M-2.8 9.2 H2.8"/><path d="M9.3 -9.8 L-9.3 9.6"/></g></svg>
<svg style="left:1867px;top:817px" width="24" height="22" viewBox="-12 -11 24 22"><g fill="none" stroke="#e0353f" stroke-width="1.3" stroke-linejoin="round" stroke-linecap="round"><path d="M3 -5.8 H-6.8 a2.2 2.2 0 0 0 -2.2 2.2 V3.6 a2.2 2.2 0 0 0 0.8 1.7 M-3.5 5.8 H2.3 a2.2 2.2 0 0 0 2.2 -2.2 V-1"/><path d="M4.6 -0.8 L9.6 -4.6 V4.6 L4.6 1.2"/><path d="M10 -10 L-9.6 9.6"/></g></svg>
<div class="av" style="left:1548px;top:862px"><svg style="left:0;top:0" width="33" height="33" viewBox="0 0 33 33"><defs><filter id="fp15" x="-10%" y="-10%" width="120%" height="120%"><feGaussianBlur stdDeviation="0.55"/></filter></defs><defs><linearGradient id="ap15" x1="0" x2="0" y1="0" y2="1"><stop offset="0" stop-color="#9aa3ab"/><stop offset=".38" stop-color="#c3cbd2"/><stop offset=".44" stop-color="#5f666c"/><stop offset=".5" stop-color="#8f989f"/><stop offset="1" stop-color="#aab2b8"/></linearGradient></defs><rect width="33" height="33" fill="url(#ap15)"/><g filter="url(#fp15)"><path d="M8 33 C8 24 10 17 14 14 C18 10 24 10 26 14 C30 18 31 26 31 33Z" fill="#191a1d"/><path d="M19 10 C23 8 27 11 26 16 L20 18Z" fill="#222428"/><ellipse cx="15" cy="9" rx="3.400" ry="4.200" fill="#7d746c"/><path d="M11 7.500 C11 2.500 18.500 2 19 7 C17 5.500 13 5.500 11 7.500Z" fill="#1c1c1e"/><rect x="12" y="20" width="4" height="8" fill="#d8d8d8"/></g></svg></div>
<div class="t" style="left:1596.0px;top:870.5px;font-size:16px;line-height:19px;color:#232333;letter-spacing:-0.456px;">Влад Кожан</div>
<svg style="left:1838px;top:868px" width="22" height="22" viewBox="-11 -11 22 22"><g fill="none" stroke="#e0353f" stroke-width="1.3" stroke-linecap="round"><path d="M-3 -0.5 V-5 a3 3 0 0 1 6 0 V0.5 a3 3 0 0 1 -4.5 2.6"/><path d="M-5.6 0.5 a5.6 5.6 0 0 0 1.6 3.6 M5.6 0.5 a5.6 5.6 0 0 1 -8 5"/><path d="M0 6.3 V9 M-2.8 9.2 H2.8"/><path d="M9.3 -9.8 L-9.3 9.6"/></g></svg>
<svg style="left:1867px;top:868px" width="24" height="22" viewBox="-12 -11 24 22"><g fill="none" stroke="#e0353f" stroke-width="1.3" stroke-linejoin="round" stroke-linecap="round"><path d="M3 -5.8 H-6.8 a2.2 2.2 0 0 0 -2.2 2.2 V3.6 a2.2 2.2 0 0 0 0.8 1.7 M-3.5 5.8 H2.3 a2.2 2.2 0 0 0 2.2 -2.2 V-1"/><path d="M4.6 -0.8 L9.6 -4.6 V4.6 L4.6 1.2"/><path d="M10 -10 L-9.6 9.6"/></g></svg>
<div class="av" style="left:1548px;top:913px;background:#34495e">Г</div>
<div class="t" style="left:1596.0px;top:921.5px;font-size:16px;line-height:19px;color:#232333;letter-spacing:-0.052px;">Гріщенко Інна</div>
<svg style="left:1838px;top:919px" width="22" height="22" viewBox="-11 -11 22 22"><g fill="none" stroke="#e0353f" stroke-width="1.3" stroke-linecap="round"><path d="M-3 -0.5 V-5 a3 3 0 0 1 6 0 V0.5 a3 3 0 0 1 -4.5 2.6"/><path d="M-5.6 0.5 a5.6 5.6 0 0 0 1.6 3.6 M5.6 0.5 a5.6 5.6 0 0 1 -8 5"/><path d="M0 6.3 V9 M-2.8 9.2 H2.8"/><path d="M9.3 -9.8 L-9.3 9.6"/></g></svg>
<svg style="left:1867px;top:919px" width="24" height="22" viewBox="-12 -11 24 22"><g fill="none" stroke="#e0353f" stroke-width="1.3" stroke-linejoin="round" stroke-linecap="round"><path d="M3 -5.8 H-6.8 a2.2 2.2 0 0 0 -2.2 2.2 V3.6 a2.2 2.2 0 0 0 0.8 1.7 M-3.5 5.8 H2.3 a2.2 2.2 0 0 0 2.2 -2.2 V-1"/><path d="M4.6 -0.8 L9.6 -4.6 V4.6 L4.6 1.2"/><path d="M10 -10 L-9.6 9.6"/></g></svg>
<div style="left:1809px;top:259.5px;width:20px;height:14.5px;background:#12a340;border-radius:2.5px"></div>
<svg style="left:1809px;top:259.5px" width="20" height="14.5" viewBox="0 0 20 14.5"><path d="M10 11 V4.5 M7.3 6.8 L10 4 L12.7 6.8" fill="none" stroke="#fff" stroke-width="1.7" stroke-linecap="round" stroke-linejoin="round"/></svg>
<div style="left:1560.3px;top:983.6px;width:110.5px;height:27.8px;background:#fff;border:1px solid #8e8e9c;border-radius:8px"></div>
<div class="t" style="left:1574.7px;top:987.8px;font-size:15.5px;line-height:19px;color:#232333;letter-spacing:-0.198px;">Пригласить</div>
<div style="left:1710.3px;top:983.6px;width:171.4px;height:27.8px;background:#fff;border:1px solid #8e8e9c;border-radius:8px"></div>
<div class="t" style="left:1724.7px;top:987.8px;font-size:15.5px;line-height:19px;color:#232333;letter-spacing:0.069px;">Включить свой звук</div>
<div class="t" style="left:13.3px;top:1007.6px;font-size:14.5px;line-height:17px;color:#c6c6c6;font-weight:bold;letter-spacing:-0.185px;">Включить звук</div>
<div class="t" style="left:153.3px;top:1007.6px;font-size:14.5px;line-height:17px;color:#c6c6c6;font-weight:bold;letter-spacing:-0.205px;">Начать видео</div>
<div class="t" style="left:350.0px;top:1007.6px;font-size:14.5px;line-height:17px;color:#c6c6c6;font-weight:bold;letter-spacing:-0.101px;">Участники</div>
<div class="t" style="left:478.8px;top:1007.6px;font-size:14.5px;line-height:17px;color:#23d959;font-weight:bold;letter-spacing:-0.050px;">Демонстрация экрана</div>
<div class="t" style="left:670.0px;top:1007.6px;font-size:14.5px;line-height:17px;color:#c6c6c6;font-weight:bold;letter-spacing:-0.315px;">Сводка</div>
<div class="t" style="left:766.4px;top:1007.6px;font-size:14.5px;line-height:17px;color:#c6c6c6;font-weight:bold;letter-spacing:-0.148px;">Реакции</div>
<div class="t" style="left:856.4px;top:1007.6px;font-size:14.5px;line-height:17px;color:#c6c6c6;font-weight:bold;letter-spacing:0.143px;">Приложения</div>
<div class="t" style="left:968.0px;top:1007.6px;font-size:14.5px;line-height:17px;color:#c6c6c6;font-weight:bold;letter-spacing:0.063px;">Доски сообщений</div>
<div class="t" style="left:1124.0px;top:1007.6px;font-size:14.5px;line-height:17px;color:#c6c6c6;font-weight:bold;letter-spacing:0.136px;">Примечания</div>
<div class="t" style="left:1241.0px;top:1007.6px;font-size:14.5px;line-height:17px;color:#c6c6c6;font-weight:bold;letter-spacing:-0.208px;">Дополнительно</div>
<svg style="left:105px;top:981px" width="14" height="10" viewBox="-7 -5 14 10"><path d="M-4.3 2.4 L0 -2 L4.3 2.4" fill="none" stroke="#c6c6c6" stroke-width="1.9" stroke-linecap="round" stroke-linejoin="round"/></svg>
<svg style="left:253px;top:981px" width="14" height="10" viewBox="-7 -5 14 10"><path d="M-4.3 2.4 L0 -2 L4.3 2.4" fill="none" stroke="#c6c6c6" stroke-width="1.9" stroke-linecap="round" stroke-linejoin="round"/></svg>
<svg style="left:446px;top:981px" width="14" height="10" viewBox="-7 -5 14 10"><path d="M-4.3 2.4 L0 -2 L4.3 2.4" fill="none" stroke="#c6c6c6" stroke-width="1.9" stroke-linecap="round" stroke-linejoin="round"/></svg>
<svg style="left:823px;top:981px" width="14" height="10" viewBox="-7 -5 14 10"><path d="M-4.3 2.4 L0 -2 L4.3 2.4" fill="none" stroke="#c6c6c6" stroke-width="1.9" stroke-linecap="round" stroke-linejoin="round"/></svg>
<svg style="left:48px;top:969px" width="34" height="34" viewBox="0 0 34 34"><rect x="11.7" y="3.5" width="9.6" height="17" rx="4.8" fill="#bdbdbd"/><path d="M8.2 15 a8.3 8.3 0 0 0 16.6 0" fill="none" stroke="#bdbdbd" stroke-width="1.8" stroke-linecap="round"/><path d="M16.5 23.5 V29 M12 29.6 H21" stroke="#bdbdbd" stroke-width="1.8" stroke-linecap="round"/><path d="M31.3 2.6 L3 31" stroke="#1a1a1a" stroke-width="4.2"/><path d="M31.3 2.6 L3 31" stroke="#e8505b" stroke-width="1.9"/></svg>
<svg style="left:184px;top:969px" width="36" height="34" viewBox="0 0 36 34"><rect x="2.7" y="7.7" width="22" height="18.6" rx="4" fill="#bdbdbd"/><path d="M25.8 14.2 L31.2 9.6 a1.3 1.3 0 0 1 2.2 1 V23.4 a1.3 1.3 0 0 1 -2.2 1 L25.8 19.8Z" fill="#bdbdbd"/><path d="M33 2.6 L3.5 31" stroke="#1a1a1a" stroke-width="4.2"/><path d="M33 2.6 L3.5 31" stroke="#e8505b" stroke-width="1.9"/></svg>
<svg style="left:370px;top:973px" width="34" height="27" viewBox="0 0 34 27"><g fill="#bdbdbd"><circle cx="11.3" cy="7.8" r="5.6"/><path d="M1.5 24.6 V21.5 C1.5 17 6 14.6 11.3 14.6 C16.6 14.6 21 17 21 21.5 V24.6Z" /><circle cx="23.2" cy="9.6" r="4.6"/><path d="M22.6 24.6 V21 C22.6 19 21.8 17.4 20.6 16.2 C21.5 16 22.3 15.9 23.2 15.9 C27.8 15.9 32 18 32 21.8 V24.6Z"/></g></svg>
<div class="t" style="left:408.0px;top:974.1px;font-size:15.5px;line-height:19px;color:#c6c6c6;letter-spacing:-0.120px;">34</div>
<div style="left:541.8px;top:975px;width:30.8px;height:22.4px;background:#23d959;border-radius:4.5px"></div>
<svg style="left:541.8px;top:975px" width="30.8" height="22.4" viewBox="0 0 30.8 22.4"><path d="M15.4 17 V6.5 M11.2 10.4 L15.4 6 L19.6 10.4" fill="none" stroke="#16321f" stroke-width="2.2" stroke-linecap="round" stroke-linejoin="round"/></svg>
<svg style="left:682px;top:969px" width="30" height="32" viewBox="0 0 30 32"><path d="M6 2 H17.5 L27.3 11.5 V26.4 a4 4 0 0 1 -4 4 H6 a4 4 0 0 1 -4 -4 V6 a4 4 0 0 1 4 -4Z" fill="#bdbdbd"/><path d="M18.2 2.2 V8.3 a2.6 2.6 0 0 0 2.6 2.6 H27" fill="none" stroke="#1a1a1a" stroke-width="1.6"/><path d="M13 14 L14.6 18.4 L19 20 L14.6 21.6 L13 26 L11.4 21.6 L7 20 L11.4 18.4Z M19.6 12.6 L20.3 14.4 L22 15 L20.3 15.6 L19.6 17.4 L18.9 15.6 L17.2 15 L18.9 14.4Z" fill="#1a1a1a"/></svg>
<svg style="left:782px;top:969px" width="32" height="30" viewBox="0 0 32 30"><circle cx="14" cy="16.7" r="11" fill="#bdbdbd"/><circle cx="24.6" cy="7" r="6" fill="#1a1a1a"/><path d="M24.6 3.2 V10.8 M20.8 7 H28.4" stroke="#bdbdbd" stroke-width="1.7" stroke-linecap="round"/><circle cx="10" cy="14" r="1.6" fill="#1a1a1a"/><circle cx="18" cy="14" r="1.6" fill="#1a1a1a"/><path d="M8.6 18.6 a5.6 5.6 0 0 0 10.8 0Z" fill="#1a1a1a"/></svg>
<svg style="left:890px;top:975px" width="24" height="24" viewBox="0 0 24 24"><g fill="none" stroke="#bdbdbd" stroke-width="1.9" stroke-linecap="round"><path d="M2.5 10 V7 a4 4 0 0 1 4 -4 H11"/><path d="M21.5 13 V17.5 a4 4 0 0 1 -4 4 H13"/><circle cx="18.5" cy="5.6" r="2.9"/><circle cx="5.6" cy="18.4" r="2.9"/></g></svg>
<svg style="left:1019px;top:972px" width="28" height="25" viewBox="0 0 28 25"><path d="M9 19 H5.6 a3.3 3.3 0 0 1 -3.3 -3.3 V6 a3.3 3.3 0 0 1 3.3 -3.3 H22 a3.3 3.3 0 0 1 3.3 3.3 V13.6" fill="none" stroke="#bdbdbd" stroke-width="2" stroke-linecap="round"/><rect x="10.5" y="17" width="16" height="5.4" rx="2.7" fill="#bdbdbd"/></svg>
<svg style="left:1157px;top:972px" width="26" height="29" viewBox="0 0 26 29"><g fill="none" stroke="#bdbdbd" stroke-linecap="round"><path d="M13 24.8 H7.6 a3 3 0 0 1 -3 -3 V5.6 a3 3 0 0 1 3 -3 H17.6 a3 3 0 0 1 3 3 V19" stroke-width="1.8"/><path d="M9 8.6 H16.6 M9 12.4 H16.6 M9 16.2 H13" stroke-width="1.4"/><path d="M2.4 6.4 H4.8 M2.4 10 H4.8 M2.4 13.6 H4.8 M2.4 17.2 H4.8 M2.4 20.8 H4.8" stroke-width="1.1"/></g><rect x="11.2" y="21.6" width="13.4" height="5" rx="2.5" fill="#bdbdbd"/></svg>
<div style="left:1284.1px;top:983.3px;width:5.4px;height:5.4px;border-radius:50%;background:#bdbdbd"></div>
<div style="left:1294.3999999999999px;top:983.3px;width:5.4px;height:5.4px;border-radius:50%;background:#bdbdbd"></div>
<div style="left:1304.7px;top:983.3px;width:5.4px;height:5.4px;border-radius:50%;background:#bdbdbd"></div>
<div style="left:1427.7px;top:980px;width:77.3px;height:33.8px;background:#c42b2b;border-radius:8px"></div>
<div class="t" style="left:1442.0px;top:987.8px;font-size:15px;line-height:18px;color:#fff;font-weight:bold;letter-spacing:-0.487px;">Выйти</div>
<svg style="left:19px;top:1044px" width="22" height="22" viewBox="0 0 22 22"><g fill="#fff"><path d="M0.5 3.6 L9.2 2.4 V10.4 H0.5Z M10.3 2.2 L21 0.7 V10.4 H10.3Z M0.5 11.5 H9.2 V19.5 L0.5 18.3Z M10.3 11.5 H21 V21.2 L10.3 19.7Z"/></g></svg>
<div style="left:60px;top:1030px;width:360px;height:49.5px;background:#f2f2f2;overflow:hidden"></div>
<svg style="left:74px;top:1044px" width="24" height="24" viewBox="0 0 24 24"><circle cx="14.5" cy="8.8" r="6.4" fill="none" stroke="#222" stroke-width="1.5"/><path d="M10 13.5 L2.6 21" stroke="#222" stroke-width="1.5" stroke-linecap="round"/></svg>
<div class="t" style="left:110.0px;top:1044.1px;font-size:19.5px;line-height:23px;color:#3a3a3a;letter-spacing:-0.057px;">Пошук</div>
<svg style="left:320px;top:1030px" width="100" height="50" viewBox="0 0 100 50"><defs><linearGradient id="wt" x1="0" y1="0" x2="1" y2="1"><stop offset="0" stop-color="#7fdde0"/><stop offset=".5" stop-color="#35bfcf"/><stop offset="1" stop-color="#2a9fbd"/></linearGradient></defs><path d="M12 50 C22 47 40 46 58 42 C74 38 84 33 90 31 L100 30 V50Z" fill="#e0b48c"/><path d="M0 50 C4 42 10 35 20 31.500 C32 28 50 29 68 28.500 C78 28.500 86 30 89 32.500 C82 36 70 39.500 56 42 C40 45 24 46 14 50Z" fill="url(#wt)"/><path d="M12 40 C20 33 34 31 52 31 C64 31 74 31 80 32 C68 34 52 34 38 36 C26 38 18 40 12 40Z" fill="#a9ecec" opacity=".85"/><path d="M66 29 C68 22 76 18.500 84 18.500 C92 18.500 98 22 100 26 V31 C90 30.500 76 30.500 66 29Z" fill="#5f9a36"/><path d="M76 20.500 C80 18 90 18 95 21 C90 20 82 20 76 20.500Z" fill="#86b84f"/><g stroke="#2f7a2e" stroke-width="1.300" fill="none" stroke-linecap="round"><path d="M76.500 20 V13.500 M72.500 12 L76.500 13.500 L80.500 11 M72.500 16 L76.500 13.500 L80.500 15.500 M76.500 13.500 L75 9.500"/><path d="M85 19 V10.500 M80.500 9 L85 10.500 L90 8 M81 13.500 L85 10.500 L89.500 13 M85 10.500 L84 6.500"/></g><g fill="#d8c2b6"><ellipse cx="23.500" cy="13.200" rx="11.500" ry="1.800"/><ellipse cx="20" cy="11.500" rx="4" ry="2.300"/><ellipse cx="27" cy="11.200" rx="4.500" ry="2.500"/></g><g fill="#cfb0a2"><ellipse cx="44" cy="18.300" rx="14.500" ry="2.200"/><ellipse cx="39" cy="15.500" rx="5" ry="3.200"/><ellipse cx="48" cy="14.800" rx="6" ry="3.800"/><ellipse cx="54" cy="16.500" rx="4" ry="2.500"/></g></svg>
<svg style="left:437px;top:1043px" width="26" height="24" viewBox="0 0 26 24"><g fill="none" stroke="#fff" stroke-width="1.300"><rect x="3.200" y="7.300" width="12.200" height="8.300"/><path d="M3.200 2 V5.200 H15.400 V2 M3.200 21 V17.700 H15.400 V21"/><path d="M21.500 2 V6.800 M21.500 10.800 V21"/></g><rect x="20" y="7.400" width="3" height="3" fill="#fff"/></svg>
<svg style="left:499px;top:1040px" width="30" height="30" viewBox="0 0 30 30"><path d="M2 1 H26 L29 4 V29 H2Z" fill="#2c5fc4"/><rect x="7" y="1" width="15" height="9" fill="#dfe6f5"/><rect x="16" y="2.5" width="4" height="6" fill="#2c4f9c"/><rect x="5" y="13" width="21" height="16" fill="#f7e9ec"/><path d="M7 16.5 H24 M7 19.5 H24 M7 22.5 H16" stroke="#d96a7a" stroke-width="1.2"/><rect x="16" y="22" width="9" height="6" fill="#fff"/><text x="20.5" y="27.3" font-family="Liberation Sans,sans-serif" font-size="6" font-weight="bold" fill="#222" text-anchor="middle">64</text></svg>
<svg style="left:560px;top:1040px" width="30" height="30" viewBox="0 0 30 30"><path d="M9 8 V5.5 a2.5 2.5 0 0 1 2.5 -2.5 H18.5 a2.5 2.5 0 0 1 2.5 2.5 V8" fill="none" stroke="#3aa0d8" stroke-width="1.8"/><path d="M1.5 8 H28.5 V25 a3 3 0 0 1 -3 3 H4.500 a3 3 0 0 1 -3 -3Z" fill="#f2f2f2"/><rect x="9.500" y="12.500" width="5" height="5" fill="#f25022"/><rect x="15.500" y="12.500" width="5" height="5" fill="#7fba00"/><rect x="9.500" y="18.500" width="5" height="5" fill="#00a4ef"/><rect x="15.500" y="18.500" width="5" height="5" fill="#ffb900"/></svg>
<svg style="left:622px;top:1039px" width="32" height="32" viewBox="0 0 32 32"><defs><linearGradient id="eg1" x1="0" y1="0" x2="1" y2="1"><stop offset="0" stop-color="#35c1f1"/><stop offset=".6" stop-color="#1a8ad6"/><stop offset="1" stop-color="#0c59a4"/></linearGradient><linearGradient id="eg2" x1="0" y1="0" x2="1" y2="0"><stop offset="0" stop-color="#2ab0e8"/><stop offset="1" stop-color="#5fd35a"/></linearGradient></defs><circle cx="16" cy="16" r="14.5" fill="url(#eg1)"/><path d="M2 14 C3 6 9 1.500 16 1.500 C24 1.500 30.500 7 30.500 14 C30.500 19 27 21 23.500 21 C21 21 19.500 20 20 18.500 C21 16 19 12 15 12 C9 12 4 15 2 20Z" fill="url(#eg2)"/><path d="M8.500 18 C8.500 24 13 29 20 29.500 C23 29.500 26 28.500 28 26.500 C24 28 18 27 15.500 23 C14 20.500 14.500 18 16 16.500 C12 15.500 8.500 16 8.500 18Z" fill="#0c4f9c"/></svg>
<svg style="left:684px;top:1039px" width="32" height="32" viewBox="0 0 32 32"><rect x="1" y="1" width="30" height="30" rx="13" fill="#0b5cff"/><ellipse cx="12" cy="9" rx="9" ry="6" fill="#3f86ff" opacity=".45"/><text x="16" y="19" font-family="Liberation Sans,sans-serif" font-size="8.6" font-weight="bold" fill="#fff" text-anchor="middle">zoom</text></svg>
<svg style="left:746.5px;top:1040px" width="31" height="31" viewBox="-16 -16 32 32"><circle r="15" fill="#fff"/><path d="M0 0 L-12.99 -7.5 A15 15 0 0 1 12.99 -7.5Z" fill="#ea4335"/><path d="M0 0 L12.99 -7.5 A15 15 0 0 1 0 15Z" fill="#fbbc05"/><path d="M0 0 L0 15 A15 15 0 0 1 -12.99 -7.5Z" fill="#34a853"/><path d="M-12.99 -7.5 A15 15 0 0 1 12.99 -7.5 L0 -7.5Z" fill="#ea4335"/><circle r="7" fill="#fff"/><circle r="5.600" fill="#4285f4"/></svg>
<svg style="left:809px;top:1041px" width="29" height="29" viewBox="0 0 29 29"><circle cx="14.500" cy="14.500" r="14" fill="#2aa1da"/><path d="M6 14.200 L22.500 7.600 L19.800 21.600 L14.800 17.900 L12.300 20.500 L12 16.400 L19.500 10 L10.200 15.700Z" fill="#fff"/></svg>
<svg style="left:870px;top:1039px" width="31" height="33" viewBox="0 0 31 33"><path d="M15.500 1.500 C24 1.500 29 5 29 14 C29 22 24.500 26.500 16.500 26.600 L12 31.500 V26.200 C5.500 25 2 21 2 14 C2 5 7 1.500 15.500 1.500Z" fill="#7b5cd6" stroke="#ece6fb" stroke-width="1.700"/><path d="M10.300 8 C9.300 8.600 8.800 9.600 9.200 10.900 C10.600 15 13.600 18.300 18 20 C19.300 20.500 20.500 19.800 21 18.600 L19.300 16.600 L17.500 17.200 C15.500 16.200 13.600 14.400 12.800 12.200 L13.700 10.800Z" fill="#fff"/><path d="M16 7.500 a6 6 0 0 1 6 6 M16 10 a3.500 3.500 0 0 1 3.500 3.500" fill="none" stroke="#fff" stroke-width="1.100" stroke-linecap="round"/></svg>
<svg style="left:932px;top:1040px" width="31" height="31" viewBox="-16 -16 32 32"><circle r="15" fill="#fff"/><path d="M0 0 L-12.99 -7.5 A15 15 0 0 1 12.99 -7.5Z" fill="#ea4335"/><path d="M0 0 L12.99 -7.5 A15 15 0 0 1 0 15Z" fill="#fbbc05"/><path d="M0 0 L0 15 A15 15 0 0 1 -12.99 -7.5Z" fill="#34a853"/><path d="M-12.99 -7.5 A15 15 0 0 1 12.99 -7.5 L0 -7.5Z" fill="#ea4335"/><circle r="7" fill="#fff"/><circle r="5.600" fill="#4285f4"/></svg>
<div style="left:948.500px;top:1052px;width:15.500px;height:19px;border-radius:6px 6px 4px 4px;background:#1c1418;overflow:hidden"><div style="left:4.500px;top:4px;width:6.500px;height:8px;border-radius:3px;background:#d8a090"></div><div style="left:3px;top:1.500px;width:9.500px;height:4.500px;border-radius:5px 5px 0 0;background:#150e12"></div><div style="left:2px;top:13px;width:11.500px;height:6px;background:#34449e;border-radius:3px 3px 0 0"></div></div>
<svg style="left:995px;top:1040px" width="30" height="30" viewBox="0 0 30 30"><defs><linearGradient id="wg" x1="0" y1="0" x2="0" y2="1"><stop offset="0" stop-color="#e9f1fb"/><stop offset=".55" stop-color="#9dc0ea"/><stop offset="1" stop-color="#2a62b8"/></linearGradient></defs><rect x="1" y="2" width="26" height="26" rx="1.500" fill="url(#wg)"/><text x="13" y="19.500" font-family="Liberation Sans,sans-serif" font-size="19" font-weight="bold" fill="#1f4fa0" text-anchor="middle">W</text><path d="M20 17 L29 15 L29.500 26 L21 27.500Z" fill="#f4f6fa" stroke="#b8c6dc" stroke-width=".6"/></svg>
<div style="left:675px;top:1077px;width:51px;height:3px;background:#8ab9e0;"></div>
<div style="left:923px;top:1077px;width:50px;height:3px;background:#8ab9e0;"></div>
<div style="left:985px;top:1077px;width:51px;height:3px;background:#8ab9e0;"></div>
<div style="left:1504px;top:1042.5px;width:25.4px;height:25.4px;background:radial-gradient(circle at 38% 32%,#ffb84d 0%,#ff9d22 40%,#f27a12 78%,#e0600c 100%);border-radius:50%"></div>
<div class="t" style="left:1543.0px;top:1044.5px;font-size:18px;line-height:22px;color:#fff;letter-spacing:-0.805px;">16°C</div>
<div class="t" style="left:1590.5px;top:1044.5px;font-size:18px;line-height:22px;color:#fff;letter-spacing:-0.608px;">Sunny</div>
<svg style="left:1668px;top:1049px" width="20" height="12" viewBox="0 0 20 12"><path d="M2 10 L10 2 L18 10" fill="none" stroke="#fff" stroke-width="1.300"/></svg>
<svg style="left:1699px;top:1043px" width="18" height="23" viewBox="0 0 18 23"><rect x="4.800" y="1.500" width="8.400" height="13.500" rx="3" fill="#fff"/><path d="M2.500 10.500 V12 a6.500 6.500 0 0 0 13 0 V10.500" fill="none" stroke="#fff" stroke-width="1.100"/><path d="M9 18.500 V21.300 M5.800 21.500 H12.200" stroke="#fff" stroke-width="1.100"/></svg>
<div class="t" style="left:1732.0px;top:1046.5px;font-size:15px;line-height:18px;color:#fff;letter-spacing:-0.857px;">УКР</div>
<div class="t" style="left:1794.0px;top:1034.8px;font-size:14.5px;line-height:17px;color:#fff;letter-spacing:-0.242px;">11:38</div>
<div class="t" style="left:1776.0px;top:1058.2px;font-size:14.5px;line-height:17px;color:#fff;letter-spacing:-0.287px;">05.04.2024</div>
<svg style="left:1866px;top:1043px" width="36" height="34" viewBox="0 0 36 34"><path d="M3 2.500 H23 V18.500 H12 L8 22.500 V18.500 H3Z" fill="#fff"/><path d="M6 7 H20 M6 10.500 H20 M6 14 H20" stroke="#1c2a44" stroke-width="1.200"/><circle cx="22.700" cy="21.600" r="9.600" fill="#2a2f3a" stroke="#8a8f9a" stroke-width="1"/><text x="22.700" y="26.500" font-family="Liberation Sans,sans-serif" font-size="13.500" font-weight="bold" fill="#fff" text-anchor="middle">3</text></svg>
<div style="left:1914px;top:1030px;width:1px;height:50px;background:#8a93a0;"></div>
<svg style="left:0;top:0" width="1920" height="1080" viewBox="0 0 1920 1080" font-family="Liberation Sans,sans-serif"><text x="157.0" y="239.2" font-size="17.5" fill="#1d4f9c" font-weight="bold" letter-spacing="0.016" text-anchor="start">Europe accounts for half of the world’s international arrivals,</text><text x="157.0" y="260.0" font-size="17.5" fill="#1d4f9c" letter-spacing="-0.006" text-anchor="start">followed by Asia and the Pacific, with 1 in 4 arrivals</text><text x="157.0" y="579.6" font-size="17.5" fill="#1d4f9c" font-weight="bold" letter-spacing="0.076" text-anchor="start">Europe represents almost 40% of international tourism receipts,</text><text x="157.0" y="600.0" font-size="17.5" fill="#1d4f9c" letter-spacing="0.057" text-anchor="start">followed by Asia and the Pacific with almost one third</text><path d="M434.70 310.80 A98.7 98.7 0 1 1 428.50 508.01 L431.29 463.69 A54.3 54.3 0 1 0 434.70 355.20Z" fill="#0f75bc"/><path d="M428.50 508.01 A98.7 98.7 0 0 1 336.19 403.30 L380.51 406.09 A54.3 54.3 0 0 0 431.29 463.69Z" fill="#fdc82f"/><path d="M336.19 403.30 A98.7 98.7 0 0 1 381.81 326.16 L405.60 363.65 A54.3 54.3 0 0 0 380.51 406.09Z" fill="#d9532c"/><path d="M381.81 326.16 A98.7 98.7 0 0 1 410.15 313.90 L421.20 356.91 A54.3 54.3 0 0 0 405.60 363.65Z" fill="#17a673"/><path d="M410.15 313.90 A98.7 98.7 0 0 1 434.70 310.80 L434.70 355.20 A54.3 54.3 0 0 0 421.20 356.91Z" fill="#9b5a4a"/><path d="M435.50 646.70 A98.7 98.7 0 0 1 498.41 821.45 L470.11 787.24 A54.3 54.3 0 0 0 435.50 691.10Z" fill="#0f75bc"/><path d="M498.41 821.45 A98.7 98.7 0 0 1 343.73 781.73 L385.01 765.39 A54.3 54.3 0 0 0 470.11 787.24Z" fill="#fdc82f"/><path d="M343.73 781.73 A98.7 98.7 0 0 1 387.95 658.91 L409.34 697.82 A54.3 54.3 0 0 0 385.01 765.39Z" fill="#d9532c"/><path d="M387.95 658.91 A98.7 98.7 0 0 1 417.01 648.45 L425.33 692.06 A54.3 54.3 0 0 0 409.34 697.82Z" fill="#9b5a4a"/><path d="M417.01 648.45 A98.7 98.7 0 0 1 435.50 646.70 L435.50 691.10 A54.3 54.3 0 0 0 425.33 692.06Z" fill="#17a673"/><text stroke="#808080" stroke-width="0.7" x="434.7" y="413.6" font-size="17.5" fill="#808080" letter-spacing="0.508" text-anchor="middle">Arrivals</text><text stroke="#808080" stroke-width="0.7" x="435.5" y="750.6" font-size="17.5" fill="#808080" letter-spacing="0.652" text-anchor="middle">Receipts</text><text x="421.8" y="296.3" font-size="12.5" letter-spacing="0.025" xml:space="preserve"><tspan fill="#2c5aa0">Middle East </tspan><tspan fill="#1d4f9c" font-weight="bold">4</tspan><tspan fill="#2c5aa0">%</tspan></text><path d="M421.8 302.6 H509.0 M422.3 302.6 V311.0" fill="none" stroke="#8a8f98" stroke-width="1"/><text x="339.0" y="305.0" font-size="12.5" letter-spacing="0.057" xml:space="preserve"><tspan fill="#2c5aa0">Africa </tspan><tspan fill="#1d4f9c" font-weight="bold">5</tspan><tspan fill="#2c5aa0">%</tspan></text><path d="M339.0 310.5 H393.0 M392.5 310.5 V319.0" fill="none" stroke="#8a8f98" stroke-width="1"/><text x="266.0" y="350.0" font-size="12.5" letter-spacing="0.010" xml:space="preserve"><tspan fill="#2c5aa0">Americas </tspan><tspan fill="#1d4f9c" font-weight="bold">15</tspan><tspan fill="#2c5aa0">%</tspan></text><path d="M266.0 355.7 H346.7 M346.2 355.7 V360.6" fill="none" stroke="#8a8f98" stroke-width="1"/><text x="531.9" y="371.0" font-size="12.5" letter-spacing="0.030" xml:space="preserve"><tspan fill="#2c5aa0">Europe </tspan><tspan fill="#1d4f9c" font-weight="bold">51</tspan><tspan fill="#2c5aa0">%</tspan></text><path d="M531.9 376.6 H601.0 M532.4 376.6 V385.0" fill="none" stroke="#8a8f98" stroke-width="1"/><text x="193.0" y="459.5" font-size="12.5" letter-spacing="-0.053" xml:space="preserve"><tspan fill="#2c5aa0">Asia and the Pacific </tspan><tspan fill="#1d4f9c" font-weight="bold">25</tspan><tspan fill="#2c5aa0">%</tspan></text><path d="M193.0 465.0 H352.0" fill="none" stroke="#8a8f98" stroke-width="1"/><text x="427.0" y="632.5" font-size="12.5" letter-spacing="-0.055" xml:space="preserve"><tspan fill="#2c5aa0">Africa </tspan><tspan fill="#1d4f9c" font-weight="bold">3</tspan><tspan fill="#2c5aa0">%</tspan></text><path d="M427.0 638.0 H480.0 M427.5 638.0 V646.8" fill="none" stroke="#8a8f98" stroke-width="1"/><text x="314.4" y="639.3" font-size="12.5" letter-spacing="0.032" xml:space="preserve"><tspan fill="#2c5aa0">Middle East </tspan><tspan fill="#1d4f9c" font-weight="bold">5</tspan><tspan fill="#2c5aa0">%</tspan></text><path d="M314.4 644.9 H401.7 M401.2 644.9 V651.7" fill="none" stroke="#8a8f98" stroke-width="1"/><text x="259.4" y="706.8" font-size="12.5" letter-spacing="-0.015" xml:space="preserve"><tspan fill="#2c5aa0">Americas </tspan><tspan fill="#1d4f9c" font-weight="bold">23</tspan><tspan fill="#2c5aa0">%</tspan></text><path d="M259.4 712.4 H339.8 M339.3 712.4 V719.0" fill="none" stroke="#8a8f98" stroke-width="1"/><text x="530.7" y="705.8" font-size="12.5" letter-spacing="0.050" xml:space="preserve"><tspan fill="#2c5aa0">Europe </tspan><tspan fill="#1d4f9c" font-weight="bold">39</tspan><tspan fill="#2c5aa0">%</tspan></text><path d="M530.7 711.3 H600.0 M531.2 711.3 V719.0" fill="none" stroke="#8a8f98" stroke-width="1"/><text x="197.9" y="794.7" font-size="12.5" letter-spacing="-0.036" xml:space="preserve"><tspan fill="#2c5aa0">Asia and the Pacific </tspan><tspan fill="#1d4f9c" font-weight="bold">30</tspan><tspan fill="#2c5aa0">%</tspan></text><path d="M197.9 800.5 H354.0" fill="none" stroke="#8a8f98" stroke-width="1"/><text x="157.0" y="528.0" font-size="13" fill="#333" font-weight="bold" letter-spacing="-0.016" text-anchor="start">International tourist arrivals by region, 2019* (% share)</text><text x="157.0" y="542.2" font-size="9.3" fill="#555" letter-spacing="0.027" text-anchor="start">Source: World Tourism Organization (UNWTO).</text><text x="714.8" y="528.3" font-size="9.3" fill="#555" letter-spacing="0.051" text-anchor="end">Data as of November 2020.</text><text x="714.8" y="542.2" font-size="9.3" fill="#555" letter-spacing="0.002" text-anchor="end">* Provisional data.</text><text x="157.0" y="869.3" font-size="13" fill="#333" font-weight="bold" letter-spacing="0.001" text-anchor="start">International tourism receipts by region, 2019* (% share)</text><text x="157.0" y="882.7" font-size="9.3" fill="#555" letter-spacing="-0.246" text-anchor="start">Note:</text><text x="192.2" y="882.7" font-size="9.3" fill="#555" letter-spacing="0.046" text-anchor="start">Percentages based on USD values.</text><text x="157.0" y="896.8" font-size="9.3" fill="#555" letter-spacing="0.027" text-anchor="start">Source: World Tourism Organization (UNWTO).</text><text x="714.8" y="882.7" font-size="9.3" fill="#555" letter-spacing="0.051" text-anchor="end">Data as of November 2020.</text><text x="714.8" y="896.8" font-size="9.3" fill="#555" letter-spacing="0.002" text-anchor="end">* Provisional data.</text><text stroke="#111" stroke-width="0.3" x="815.6" y="244.2" font-size="28" fill="#111" letter-spacing="0.663" text-anchor="start">2019 рік :</text><text stroke="#111" stroke-width="0.3" x="679.5" y="289.0" font-size="28" fill="#111" text-anchor="start">•</text><text stroke="#111" stroke-width="0.3" x="706.7" y="289.0" font-size="28" fill="#111" letter-spacing="0.747" text-anchor="start">1,460 млрд. прибуттів</text><text stroke="#111" stroke-width="0.3" x="679.5" y="334.5" font-size="28" fill="#111" text-anchor="start">•</text><text stroke="#111" stroke-width="0.3" x="706.7" y="334.5" font-size="28" fill="#111" letter-spacing="0.453" text-anchor="start">1,481 трлн. дол.</text><text stroke="#111" stroke-width="0.3" x="706.7" y="364.2" font-size="28" fill="#111" letter-spacing="0.813" text-anchor="start">надходження від туристів</text><text stroke="#111" stroke-width="0.3" x="1171.9" y="254.5" font-size="28" fill="#111" letter-spacing="0.635" text-anchor="start">2023 рік:</text><text stroke="#111" stroke-width="0.3" x="1082.8" y="303.6" font-size="28" fill="#111" letter-spacing="0.747" text-anchor="start">1,285 млрд. прибуттів</text><text stroke="#111" stroke-width="0.3" x="1116.5" y="352.3" font-size="28" fill="#111" letter-spacing="0.531" text-anchor="start">1,4 трлн. доларів</text><g fill="none" stroke="#e6e6e6" stroke-width="1.2"><path d="M117 910 h8 m-8 0 l3 -3 m-3 3 l3 3"/><path d="M139 913 l8 -7"/><rect x="162" y="906" width="9" height="7" fill="#eee"/><path d="M184 910 h8 m0 0 l-3 -3 m3 3 l-3 3"/></g><path d="M890.5 286.5 V298.5 L893.3 296 L895.3 300.3 L896.8 299.6 L894.9 295.4 L898.5 295.2Z" fill="#fff" stroke="#222" stroke-width=".9"/><path d="M807.9 584.3 C807.1 583.3 809.4 578.3 811.0 575.7 C812.6 573.0 814.7 570.7 817.3 568.6 C819.9 566.5 823.1 564.5 826.8 563.1 C830.4 561.6 835.9 560.6 839.4 559.9 C842.8 559.2 844.3 558.7 847.2 558.7 C850.1 558.7 853.3 559.4 856.7 559.9 C860.1 560.4 864.0 561.4 867.7 561.5 C871.4 561.6 875.3 560.8 878.7 560.7 C882.1 560.6 885.5 560.2 888.2 560.7 C890.8 561.2 892.1 563.1 894.5 563.8 C896.8 564.6 899.7 564.8 902.3 565.4 C905.0 566.1 907.3 567.3 910.2 567.8 C913.1 568.3 917.0 568.3 919.6 568.6 C922.3 568.8 924.1 568.7 925.9 569.4 C927.8 570.0 930.7 571.7 930.7 572.5 C930.7 573.3 928.3 573.6 925.9 574.1 C923.6 574.6 919.1 574.7 916.5 575.7 C913.9 576.6 910.7 578.1 910.2 579.6 C909.7 581.0 911.8 583.0 913.4 584.3 C914.9 585.6 918.1 585.8 919.6 587.5 C921.2 589.2 921.7 593.5 922.8 594.5 C923.8 595.6 924.9 594.8 925.9 593.8 C927.0 592.7 927.8 590.0 929.1 588.2 C930.4 586.5 932.5 585.4 933.8 583.5 C935.1 581.7 935.9 578.7 937.0 577.2 C938.0 575.8 938.5 575.1 940.1 574.9 C941.7 574.6 944.6 575.0 946.4 575.7 C948.2 576.3 949.6 577.6 951.1 578.8 C952.7 580.0 954.5 581.2 955.9 582.7 C957.2 584.3 958.0 586.7 959.0 588.2 C960.1 589.8 962.2 590.9 962.2 592.2 C962.2 593.5 959.3 594.5 959.0 596.1 C958.7 597.7 961.1 600.6 960.6 601.6 C960.1 602.7 958.0 601.9 955.9 602.4 C953.8 602.9 950.3 604.0 948.0 604.8 C945.6 605.6 943.8 606.2 941.7 607.1 C939.6 608.1 937.5 609.0 935.4 610.3 C933.3 611.6 931.2 613.6 929.1 615.0 C927.0 616.5 924.6 617.5 922.8 618.9 C921.0 620.4 919.6 622.0 918.1 623.7 C916.5 625.4 915.2 627.5 913.4 629.2 C911.5 630.9 908.8 632.3 907.1 633.9 C905.3 635.5 903.6 636.5 903.1 638.6 C902.6 640.7 904.2 645.1 903.9 646.5 C903.6 647.9 902.3 648.3 901.5 647.3 C900.8 646.2 900.4 641.6 899.2 640.2 C898.0 638.8 896.3 638.8 894.5 638.6 C892.6 638.5 890.5 639.2 888.2 639.4 C885.8 639.7 882.5 639.4 880.3 640.2 C878.1 641.0 876.2 642.3 874.8 644.1 C873.3 646.0 872.2 649.0 871.6 651.2 C871.1 653.5 871.1 655.4 871.6 657.5 C872.2 659.6 873.3 662.8 874.8 663.8 C876.2 664.9 878.6 664.7 880.3 663.8 C882.0 662.9 883.7 659.2 885.0 658.3 C886.3 657.4 888.0 657.4 888.2 658.3 C888.3 659.2 886.3 662.1 885.8 663.8 C885.3 665.5 884.2 667.5 885.0 668.5 C885.8 669.6 889.2 669.1 890.5 670.1 C891.8 671.2 892.1 673.3 892.9 674.8 C893.7 676.4 893.9 678.1 895.2 679.6 C896.6 681.0 899.3 682.6 900.8 683.5 C902.2 684.4 903.6 684.4 903.9 685.1 C904.2 685.7 903.4 687.4 902.3 687.4 C901.3 687.4 899.3 686.1 897.6 685.1 C895.9 684.0 893.7 682.7 892.1 681.1 C890.5 679.6 889.9 677.2 888.2 675.6 C886.5 674.0 884.0 673.1 881.9 671.7 C879.8 670.2 877.9 667.6 875.6 667.0 C873.2 666.3 870.1 668.3 867.7 667.8 C865.3 667.2 863.4 665.5 861.4 663.8 C859.4 662.1 857.5 659.9 855.9 657.5 C854.3 655.2 853.4 652.0 852.0 649.6 C850.5 647.3 848.5 645.4 847.2 643.4 C845.9 641.3 845.3 639.4 844.1 637.1 C842.9 634.7 841.2 631.8 840.1 629.2 C839.1 626.6 837.8 624.2 837.8 621.3 C837.8 618.4 839.1 615.0 840.1 611.9 C841.2 608.7 842.9 605.6 844.1 602.4 C845.3 599.3 846.7 596.1 847.2 593.0 C847.8 589.8 847.8 586.2 847.2 583.5 C846.7 580.9 846.2 578.5 844.1 577.2 C842.0 575.9 837.8 575.4 834.6 575.7 C831.5 575.9 828.3 577.8 825.2 578.8 C822.0 579.9 818.6 581.0 815.7 582.0 C812.9 582.9 808.7 585.4 807.9 584.3Z" fill="#d9532c"/><path d="M890.5 557.6 C891.0 556.5 894.3 555.1 897.6 553.6 C900.9 552.2 905.5 550.2 910.2 548.9 C914.9 547.6 920.7 546.7 925.9 545.7 C931.2 544.8 936.4 544.0 941.7 543.4 C946.9 542.7 953.2 542.2 957.4 541.8 C961.6 541.4 966.9 540.4 966.9 541.0 C966.9 541.7 960.1 544.2 957.4 545.7 C954.8 547.3 951.1 548.6 951.1 550.5 C951.1 552.3 955.3 554.5 957.4 556.8 C959.5 559.0 962.4 562.1 963.7 563.8 C965.0 565.6 966.4 565.8 965.3 567.0 C964.3 568.2 959.8 570.5 957.4 570.9 C955.1 571.3 953.0 570.4 951.1 569.4 C949.3 568.3 948.0 565.9 946.4 564.6 C944.8 563.3 943.3 561.6 941.7 561.5 C940.1 561.4 938.3 562.9 937.0 563.8 C935.7 564.8 935.1 566.9 933.8 567.0 C932.5 567.1 930.7 565.6 929.1 564.6 C927.5 563.7 926.5 562.3 924.4 561.5 C922.3 560.7 918.9 559.9 916.5 559.9 C914.1 559.9 912.6 561.4 910.2 561.5 C907.8 561.6 905.0 561.0 902.3 560.7 C899.7 560.4 896.4 560.4 894.5 559.9 C892.5 559.4 890.0 558.6 890.5 557.6Z" fill="#d9532c"/><path d="M968.5 547.3 C970.3 546.1 976.3 543.7 981.0 542.6 C985.8 541.5 990.8 541.1 996.8 540.7 C1002.8 540.3 1010.2 540.0 1017.3 540.2 C1024.3 540.4 1037.2 540.9 1039.3 541.8 C1041.4 542.7 1032.5 544.0 1029.8 545.7 C1027.2 547.4 1025.9 549.7 1023.6 552.0 C1021.2 554.4 1018.8 557.3 1015.7 559.9 C1012.5 562.5 1008.3 565.4 1004.7 567.8 C1001.0 570.1 996.5 572.4 993.6 574.1 C990.8 575.8 989.2 577.8 987.3 578.0 C985.5 578.3 984.1 577.4 982.6 575.7 C981.2 573.9 978.9 570.4 978.7 567.8 C978.4 565.2 981.2 562.3 981.0 559.9 C980.9 557.6 979.7 555.3 977.9 553.6 C976.1 551.9 971.6 550.7 970.0 549.7 C968.5 548.6 966.6 548.5 968.5 547.3Z" fill="#d9532c"/><path d="M900.8 556.8 L910.2 553.6 L919.6 553.6 L910.2 556.4Z" fill="#fff"/><path d="M922.8 556.8 L933.8 552.0 L938.5 553.6 L930.7 558.3Z" fill="#fff"/><path d="M938.5 561.5 L946.4 556.0 L950.3 557.6 L944.8 563.8Z" fill="#fff"/><path d="M941.7 548.1 L951.1 545.0 L953.5 546.5 L944.8 549.7Z" fill="#fff"/><path d="M880.3 567.8 L885.8 565.4 L886.6 567.0 L881.1 569.4Z" fill="#fff"/><path d="M881.1 575.7 L888.2 572.5 L888.9 574.4 L881.9 577.2Z" fill="#fff"/><path d="M900.0 604.3 C901.1 603.0 904.7 601.4 906.3 601.2 C907.8 600.9 909.5 602.1 909.4 602.7 C909.3 603.4 906.7 604.3 905.5 605.3 C904.3 606.2 903.1 607.4 902.3 608.7 C901.5 610.1 901.2 613.4 900.8 613.4 C900.3 613.4 899.6 610.2 899.5 608.7 C899.4 607.2 898.8 605.6 900.0 604.3Z" fill="#fff"/><path d="M908.6 607.1 C909.8 606.1 912.8 605.4 914.9 605.9 C917.0 606.4 920.8 609.0 921.2 610.0 C921.6 611.0 918.7 611.9 917.3 611.9 C915.8 611.8 913.9 609.1 912.6 609.5 C911.3 609.9 910.2 613.8 909.4 614.2 C908.6 614.6 908.0 613.0 907.8 611.9 C907.7 610.7 907.4 608.1 908.6 607.1Z" fill="#fff"/><path d="M937.0 604.0 C938.0 602.8 943.3 600.5 946.4 599.3 C949.6 598.1 954.0 596.9 955.9 596.9 C957.7 596.9 958.7 598.4 957.4 599.3 C956.1 600.2 950.9 601.2 948.0 602.4 C945.1 603.6 942.0 606.1 940.1 606.4 C938.3 606.6 935.9 605.2 937.0 604.0Z" fill="#fff"/><path d="M894.5 654.4 C895.6 654.1 899.7 653.7 902.3 654.4 C905.0 655.0 907.3 657.3 910.2 658.3 C913.1 659.4 918.6 660.0 919.6 660.7 C920.7 661.4 918.3 662.5 916.5 662.6 C914.7 662.6 911.3 661.8 908.6 661.0 C906.0 660.2 903.0 658.6 900.8 657.8 C898.5 657.0 896.3 656.8 895.2 656.3 C894.2 655.7 893.3 654.7 894.5 654.4Z" fill="#d9532c"/><path d="M921.2 661.5 L927.5 661.9 L927.2 663.8 L921.5 663.5Z" fill="#d9532c"/><path d="M892.2 680.0 C893.4 680.6 895.7 683.4 897.8 684.2 C899.9 685.0 902.9 685.3 904.7 684.9 C906.6 684.4 907.3 682.2 908.9 681.4 C910.5 680.6 911.7 680.2 914.4 680.0 C917.2 679.8 922.1 679.3 925.6 680.0 C929.0 680.7 932.0 682.7 935.3 684.2 C938.5 685.7 942.2 687.4 945.0 689.0 C947.8 690.6 950.3 691.9 951.9 693.9 C953.6 695.9 952.4 699.0 954.7 700.8 C957.0 702.7 962.4 703.6 965.8 705.0 C969.3 706.4 972.9 707.7 975.6 709.2 C978.2 710.7 980.6 712.3 981.8 714.0 C983.0 715.8 983.1 717.6 982.5 719.6 C981.9 721.6 979.5 723.4 978.3 725.8 C977.2 728.3 976.2 731.4 975.6 734.2 C974.9 736.9 975.1 740.2 974.2 742.5 C973.2 744.8 972.1 746.2 970.0 748.1 C967.9 749.9 963.3 751.5 961.7 753.6 C960.0 755.7 961.4 757.8 960.3 760.6 C959.1 763.3 956.6 767.7 954.7 770.3 C952.9 772.8 950.0 774.4 949.2 775.8 C948.4 777.2 950.6 777.7 949.9 778.6 C949.2 779.5 946.5 780.2 945.0 781.4 C943.5 782.5 941.6 783.7 940.8 785.6 C940.0 787.4 940.5 790.4 940.1 792.5 C939.8 794.6 938.9 796.0 938.8 798.1 C938.6 800.1 938.6 802.9 939.4 805.0 C940.3 807.1 942.3 809.1 943.6 810.6 C944.9 812.1 947.3 813.4 947.1 814.0 C946.9 814.6 944.2 814.8 942.2 814.0 C940.3 813.2 937.4 811.1 935.3 809.2 C933.2 807.2 931.2 804.8 929.7 802.2 C928.2 799.7 927.3 797.1 926.2 793.9 C925.2 790.6 924.2 786.5 923.5 782.8 C922.8 779.1 922.4 775.4 922.1 771.7 C921.7 768.0 921.7 764.7 921.4 760.6 C921.0 756.4 920.7 750.4 920.0 746.7 C919.3 743.0 919.1 740.9 917.2 738.3 C915.4 735.8 911.2 734.2 908.9 731.4 C906.6 728.6 905.3 724.9 903.3 721.7 C901.4 718.4 897.9 715.0 897.1 711.9 C896.3 708.9 897.4 706.2 898.5 703.6 C899.5 701.1 902.3 699.0 903.3 696.7 C904.4 694.4 905.2 691.3 904.7 689.7 C904.3 688.1 902.2 687.9 900.6 686.9 C898.9 686.0 896.6 685.2 895.0 684.2 C893.4 683.1 891.3 681.4 890.8 680.7 C890.4 680.0 891.1 679.4 892.2 680.0Z" fill="#d9532c"/><path d="M1033.9 624.4 C1033.3 623.0 1033.1 619.8 1033.3 617.8 C1033.5 615.7 1033.5 613.2 1035.0 612.2 C1036.5 611.2 1040.1 611.9 1042.2 611.7 C1044.4 611.5 1046.8 612.1 1047.8 611.1 C1048.8 610.1 1049.0 607.0 1048.3 605.6 C1047.7 604.1 1044.0 603.2 1043.9 602.2 C1043.8 601.2 1046.2 600.4 1047.8 599.4 C1049.4 598.5 1051.7 597.8 1053.3 596.7 C1055.0 595.6 1056.2 593.8 1057.8 592.8 C1059.4 591.8 1061.7 591.4 1062.8 590.6 C1063.9 589.7 1064.4 589.0 1064.4 587.8 C1064.4 586.6 1063.6 584.6 1062.8 583.3 C1061.9 582.0 1060.1 581.3 1059.4 580.0 C1058.8 578.7 1058.2 576.9 1058.9 575.6 C1059.5 574.3 1061.5 573.7 1063.3 572.2 C1065.2 570.7 1068.0 568.3 1070.0 566.7 C1072.0 565.0 1073.5 563.3 1075.6 562.2 C1077.6 561.1 1080.0 560.5 1082.2 560.0 C1084.4 559.5 1086.7 559.0 1088.9 559.1 C1091.1 559.2 1093.3 559.9 1095.6 560.6 C1097.8 561.2 1100.6 562.1 1102.2 562.8 C1103.9 563.4 1105.2 563.6 1105.6 564.4 C1105.9 565.3 1105.2 567.1 1104.4 567.8 C1103.7 568.4 1101.9 568.0 1101.1 568.3 C1100.4 568.7 1099.4 569.5 1100.0 570.0 C1100.6 570.5 1103.0 571.5 1104.4 571.1 C1105.9 570.7 1107.6 568.9 1108.9 567.8 C1110.2 566.7 1110.7 565.4 1112.2 564.4 C1113.7 563.5 1115.9 562.7 1117.8 562.2 C1119.6 561.8 1121.9 562.1 1123.3 561.7 C1124.8 561.2 1125.4 560.1 1126.7 559.4 C1128.0 558.8 1129.4 557.8 1131.1 557.8 C1132.8 557.8 1134.8 558.7 1136.7 559.4 C1138.5 560.2 1141.2 562.7 1142.2 562.2 C1143.2 561.8 1142.2 557.8 1142.8 556.7 C1143.3 555.6 1144.5 555.2 1145.6 555.6 C1146.6 555.9 1147.8 557.8 1148.9 558.9 C1150.0 560.0 1151.5 562.6 1152.2 562.2 C1153.0 561.9 1152.6 558.0 1153.3 556.7 C1154.1 555.4 1155.4 555.2 1156.7 554.4 C1158.0 553.7 1159.3 552.9 1161.1 552.2 C1163.0 551.6 1165.4 551.0 1167.8 550.6 C1170.2 550.1 1173.3 549.7 1175.6 549.4 C1177.8 549.2 1178.9 548.8 1181.1 548.9 C1183.3 549.0 1186.5 549.4 1188.9 550.0 C1191.3 550.6 1197.4 552.5 1195.6 552.2 C1193.7 552.0 1179.3 549.0 1177.8 548.5 C1176.3 548.0 1184.2 548.6 1186.7 549.3 C1189.1 549.9 1190.6 551.4 1192.6 552.2 C1194.6 553.1 1195.8 554.1 1198.5 554.4 C1201.2 554.8 1205.4 554.2 1208.9 554.4 C1212.3 554.7 1216.3 555.4 1219.3 555.9 C1222.2 556.4 1223.7 557.3 1226.7 557.4 C1229.6 557.5 1233.8 556.7 1237.0 556.7 C1240.2 556.7 1242.7 557.0 1245.9 557.4 C1249.1 557.8 1252.8 558.3 1256.3 558.9 C1259.8 559.5 1263.0 560.6 1266.7 561.1 C1270.4 561.6 1275.1 561.9 1278.5 561.9 C1282.0 561.9 1284.4 560.9 1287.4 561.1 C1290.4 561.4 1293.3 562.7 1296.3 563.3 C1299.3 564.0 1302.0 564.2 1305.2 564.8 C1308.4 565.4 1314.1 566.2 1315.6 567.0 C1317.0 567.9 1315.3 569.4 1314.1 570.0 C1312.8 570.6 1309.0 570.1 1308.1 570.7 C1307.3 571.4 1309.9 572.6 1308.9 573.7 C1307.9 574.8 1304.1 576.8 1302.2 577.4 C1300.4 578.0 1298.1 576.4 1297.8 577.4 C1297.4 578.4 1299.5 581.4 1300.0 583.3 C1300.5 585.3 1300.9 587.2 1300.7 589.3 C1300.6 591.4 1300.1 595.7 1299.3 595.9 C1298.4 596.2 1296.8 592.6 1295.6 590.7 C1294.3 588.9 1293.0 586.5 1291.9 584.8 C1290.7 583.1 1289.3 582.1 1288.9 580.4 C1288.5 578.6 1290.1 575.4 1289.6 574.4 C1289.1 573.5 1287.0 574.0 1285.9 574.4 C1284.8 574.9 1284.2 577.2 1283.0 577.4 C1281.7 577.7 1280.2 575.7 1278.5 575.9 C1276.8 576.2 1274.6 578.1 1272.6 578.9 C1270.6 579.6 1268.4 579.5 1266.7 580.4 C1264.9 581.2 1263.2 582.8 1262.2 584.1 C1261.2 585.3 1260.0 586.9 1260.7 587.8 C1261.5 588.6 1264.7 588.5 1266.7 589.3 C1268.6 590.0 1271.1 590.5 1272.6 592.2 C1274.1 594.0 1275.2 597.2 1275.6 599.6 C1275.9 602.1 1275.3 605.1 1274.8 607.0 C1274.3 609.0 1273.6 610.9 1272.6 611.5 C1271.6 612.1 1269.9 612.0 1268.9 610.7 C1267.9 609.5 1267.5 605.9 1266.7 604.1 C1265.8 602.2 1265.2 600.9 1263.7 599.6 C1262.2 598.4 1259.8 597.4 1257.8 596.7 C1255.8 595.9 1253.8 595.9 1251.9 595.2 C1249.9 594.4 1247.7 592.6 1245.9 592.2 C1244.2 591.9 1242.5 592.2 1241.5 593.0 C1240.5 593.7 1241.2 595.8 1240.0 596.7 C1238.8 597.5 1236.3 597.8 1234.1 598.1 C1231.9 598.5 1229.1 599.1 1226.7 598.9 C1224.2 598.6 1221.2 597.3 1219.3 596.7 C1217.3 596.0 1216.8 595.6 1214.8 595.2 C1212.8 594.8 1209.1 594.1 1207.4 594.4 C1205.7 594.8 1206.4 596.9 1204.4 597.4 C1202.5 597.9 1197.8 596.9 1195.6 597.4 C1193.3 597.9 1192.3 599.0 1191.1 600.4 C1189.9 601.7 1189.4 603.7 1188.1 605.6 C1186.9 607.4 1185.2 609.9 1183.7 611.5 C1182.2 613.1 1181.0 614.2 1179.3 615.2 C1177.5 616.2 1175.3 616.8 1173.3 617.4 C1171.4 618.0 1168.9 618.1 1167.4 618.9 C1165.9 619.6 1165.7 621.0 1164.4 621.9 C1163.2 622.7 1160.9 623.2 1160.0 624.1 C1159.1 625.0 1159.8 627.0 1158.9 627.2 C1158.0 627.5 1156.1 626.4 1154.4 625.6 C1152.8 624.7 1150.9 623.0 1148.9 622.2 C1146.9 621.5 1143.7 621.1 1142.2 621.1 C1140.7 621.1 1141.1 621.9 1140.0 622.2 C1138.9 622.5 1137.0 622.8 1135.6 622.8 C1134.1 622.8 1132.6 622.3 1131.1 622.2 C1129.6 622.1 1127.8 621.9 1126.7 622.2 C1125.6 622.6 1125.6 624.1 1124.4 624.4 C1123.3 624.8 1121.7 624.4 1120.0 624.4 C1118.3 624.4 1115.9 624.3 1114.4 624.4 C1113.0 624.6 1112.4 625.2 1111.1 625.6 C1109.8 625.9 1108.1 626.7 1106.7 626.7 C1105.2 626.7 1103.7 625.9 1102.2 625.6 C1100.7 625.2 1098.9 625.0 1097.8 624.4 C1096.7 623.9 1096.1 623.1 1095.6 622.2 C1095.0 621.3 1095.2 619.6 1094.4 618.9 C1093.7 618.1 1091.5 617.2 1091.1 617.8 C1090.7 618.3 1092.6 621.1 1092.2 622.2 C1091.9 623.3 1090.0 624.6 1088.9 624.4 C1087.8 624.3 1086.5 622.4 1085.6 621.1 C1084.6 619.8 1084.2 617.8 1083.3 616.7 C1082.5 615.6 1081.5 615.2 1080.6 614.4 C1079.6 613.7 1078.8 613.0 1077.8 612.2 C1076.8 611.5 1075.4 610.7 1074.4 610.0 C1073.5 609.3 1073.1 608.3 1072.2 607.8 C1071.4 607.2 1070.0 606.3 1069.4 606.7 C1068.9 607.0 1068.4 608.9 1068.9 610.0 C1069.4 611.1 1071.1 612.2 1072.2 613.3 C1073.3 614.4 1074.4 615.6 1075.6 616.7 C1076.7 617.8 1078.7 619.1 1078.9 620.0 C1079.1 620.9 1077.3 622.4 1076.7 622.2 C1076.0 622.0 1075.7 619.8 1075.0 618.9 C1074.3 618.0 1073.2 617.5 1072.2 616.7 C1071.2 615.8 1070.0 614.8 1068.9 613.9 C1067.8 613.0 1066.5 611.8 1065.6 611.1 C1064.6 610.5 1064.4 609.8 1063.3 610.0 C1062.2 610.2 1060.4 611.7 1058.9 612.2 C1057.4 612.8 1055.7 612.6 1054.4 613.3 C1053.1 614.1 1052.0 615.6 1051.1 616.7 C1050.2 617.8 1049.6 618.7 1048.9 620.0 C1048.1 621.3 1047.8 623.3 1046.7 624.4 C1045.6 625.6 1043.9 626.3 1042.2 626.7 C1040.6 627.0 1038.1 627.0 1036.7 626.7 C1035.3 626.3 1034.4 625.9 1033.9 624.4Z" fill="#0f75bc"/><path d="M1043.9 582.2 C1044.4 581.5 1046.5 580.6 1047.2 581.1 C1048.0 581.7 1047.8 584.1 1048.3 585.6 C1048.9 587.0 1050.0 588.7 1050.6 590.0 C1051.1 591.3 1052.1 592.5 1051.7 593.3 C1051.2 594.2 1049.4 594.6 1047.8 595.0 C1046.2 595.4 1042.7 596.0 1042.2 595.6 C1041.8 595.1 1044.9 593.3 1045.0 592.2 C1045.1 591.1 1042.9 590.0 1042.8 588.9 C1042.7 587.8 1044.3 586.7 1044.4 585.6 C1044.6 584.4 1043.4 583.0 1043.9 582.2Z" fill="#0f75bc"/><path d="M1034.4 590.0 C1035.3 589.2 1038.0 588.1 1038.9 588.3 C1039.8 588.6 1040.4 590.7 1040.0 591.7 C1039.6 592.6 1037.7 593.6 1036.7 593.9 C1035.6 594.2 1034.3 594.0 1033.9 593.3 C1033.5 592.7 1033.6 590.8 1034.4 590.0Z" fill="#0f75bc"/><path d="M1021.7 568.3 C1022.4 567.8 1025.1 567.0 1026.7 566.9 C1028.2 566.8 1030.5 567.3 1031.1 567.8 C1031.8 568.3 1031.5 569.4 1030.6 570.0 C1029.6 570.6 1026.9 571.1 1025.6 571.1 C1024.2 571.1 1022.9 570.7 1022.2 570.2 C1021.6 569.8 1020.9 568.9 1021.7 568.3Z" fill="#0f75bc"/><path d="M1067.2 545.0 C1068.3 544.5 1072.8 544.0 1075.6 543.9 C1078.3 543.8 1083.1 543.8 1083.9 544.2 C1084.6 544.7 1081.8 546.2 1080.0 546.7 C1078.2 547.2 1075.2 547.2 1073.3 547.2 C1071.5 547.2 1069.9 547.0 1068.9 546.7 C1067.9 546.3 1066.1 545.5 1067.2 545.0Z" fill="#0f75bc"/><path d="M1107.8 542.8 L1112.2 542.4 L1112.2 543.6 L1107.8 543.8Z" fill="#0f75bc"/><path d="M1116.7 542.4 L1123.3 542.8 L1123.3 543.9 L1116.7 543.6Z" fill="#0f75bc"/><path d="M1120.6 556.1 C1120.7 555.0 1122.3 552.8 1123.9 551.7 C1125.5 550.5 1128.0 549.5 1130.0 549.1 C1132.0 548.7 1135.9 548.8 1136.1 549.1 C1136.3 549.4 1132.7 550.4 1131.1 551.1 C1129.5 551.8 1127.8 552.3 1126.7 553.3 C1125.6 554.4 1124.4 556.3 1124.4 557.2 C1124.4 558.2 1126.9 558.9 1126.7 559.1 C1126.4 559.3 1123.8 558.8 1122.8 558.3 C1121.8 557.8 1120.4 557.2 1120.6 556.1Z" fill="#0f75bc"/><path d="M1159.4 543.3 C1160.0 543.1 1161.8 542.5 1163.3 542.8 C1164.9 543.1 1168.7 544.6 1168.9 545.0 C1169.1 545.4 1165.9 545.1 1164.4 545.0 C1163.0 544.9 1160.8 544.7 1160.0 544.4 C1159.2 544.2 1158.9 543.6 1159.4 543.3Z" fill="#0f75bc"/><path d="M1070.6 620.0 L1073.9 620.6 L1073.3 622.2 L1070.9 621.7Z" fill="#0f75bc"/><path d="M1063.3 614.4 L1064.7 614.4 L1064.7 618.9 L1063.3 618.9Z" fill="#0f75bc"/><path d="M1271.9 589.0 C1272.0 588.3 1273.3 588.2 1274.4 589.3 C1275.5 590.3 1277.0 593.0 1278.5 595.2 C1280.1 597.4 1282.8 600.9 1283.7 602.6 C1284.6 604.3 1284.5 605.0 1284.1 605.3 C1283.8 605.5 1283.0 605.3 1281.8 604.1 C1280.6 602.9 1278.4 600.0 1277.0 598.1 C1275.6 596.3 1274.2 594.5 1273.3 593.0 C1272.5 591.4 1271.7 589.6 1271.9 589.0Z" fill="#0f75bc"/><path d="M1223.7 550.7 C1224.4 550.4 1228.4 549.9 1231.1 550.0 C1233.8 550.1 1239.5 551.1 1240.0 551.5 C1240.5 551.9 1236.3 552.4 1234.1 552.5 C1231.9 552.6 1228.4 552.5 1226.7 552.2 C1224.9 551.9 1223.0 551.1 1223.7 550.7Z" fill="#0f75bc"/><path d="M1096.7 612.8 C1097.4 611.5 1099.0 609.0 1100.0 607.8 C1101.0 606.6 1101.9 605.6 1102.8 605.6 C1103.7 605.6 1104.5 607.6 1105.6 607.8 C1106.6 608.0 1107.8 607.2 1108.9 606.7 C1110.0 606.1 1111.8 604.3 1112.2 604.4 C1112.7 604.6 1111.5 606.7 1111.7 607.8 C1111.9 608.9 1112.3 610.3 1113.3 611.1 C1114.4 611.9 1116.9 612.0 1117.8 612.8 C1118.6 613.5 1118.9 614.8 1118.3 615.6 C1117.8 616.3 1116.0 617.0 1114.4 617.2 C1112.9 617.4 1110.7 616.9 1108.9 616.7 C1107.0 616.4 1105.0 615.6 1103.3 615.6 C1101.7 615.6 1100.2 616.7 1098.9 616.7 C1097.6 616.7 1095.9 616.2 1095.6 615.6 C1095.2 614.9 1095.9 614.1 1096.7 612.8Z" fill="#fff"/><path d="M1130.0 604.4 C1131.3 604.1 1134.5 605.0 1135.6 605.6 C1136.6 606.1 1136.5 607.0 1136.1 607.8 C1135.7 608.5 1133.6 608.9 1133.3 610.0 C1133.1 611.1 1133.7 613.0 1134.4 614.4 C1135.2 615.9 1136.9 617.6 1137.8 618.9 C1138.6 620.2 1139.8 621.7 1139.4 622.2 C1139.1 622.8 1136.8 623.0 1135.6 622.2 C1134.4 621.5 1133.2 619.4 1132.2 617.8 C1131.2 616.1 1130.2 613.9 1129.4 612.2 C1128.7 610.6 1127.7 609.1 1127.8 607.8 C1127.9 606.5 1128.7 604.8 1130.0 604.4Z" fill="#fff"/><path d="M1076.7 574.4 C1077.3 573.1 1079.1 571.1 1080.6 570.0 C1082.0 568.9 1084.5 568.0 1085.6 567.8 C1086.6 567.6 1087.0 568.0 1086.7 568.9 C1086.3 569.8 1084.1 571.9 1083.3 573.3 C1082.6 574.8 1081.7 576.8 1082.2 577.8 C1082.8 578.8 1084.8 579.4 1086.7 579.4 C1088.5 579.4 1092.2 577.8 1093.3 577.8 C1094.4 577.8 1094.3 578.8 1093.3 579.4 C1092.4 580.1 1089.3 580.8 1087.8 581.7 C1086.3 582.5 1085.6 583.6 1084.4 584.4 C1083.2 585.3 1082.0 586.1 1080.6 586.7 C1079.1 587.2 1076.9 587.5 1075.6 587.8 C1074.2 588.1 1073.0 588.5 1072.2 588.3 C1071.5 588.1 1070.6 587.3 1071.1 586.7 C1071.7 586.0 1074.4 585.4 1075.6 584.4 C1076.7 583.5 1077.6 582.2 1077.8 581.1 C1078.0 580.0 1076.9 578.9 1076.7 577.8 C1076.5 576.7 1076.0 575.7 1076.7 574.4Z" fill="#fff"/><path d="M1144.4 606.7 C1145.0 606.1 1146.9 605.3 1147.8 605.6 C1148.6 605.8 1149.6 607.6 1149.4 608.3 C1149.3 609.1 1147.5 609.9 1146.7 610.0 C1145.9 610.1 1145.0 609.2 1144.7 608.7 C1144.3 608.1 1143.9 607.2 1144.4 606.7Z" fill="#fff"/><path d="M1218.5 587.0 C1218.9 586.3 1219.9 585.7 1220.0 586.3 C1220.1 586.9 1219.9 589.3 1219.3 590.7 C1218.6 592.2 1217.0 594.6 1216.3 595.2 C1215.6 595.8 1214.6 595.2 1214.8 594.4 C1215.0 593.7 1216.9 592.0 1217.5 590.7 C1218.1 589.5 1218.1 587.8 1218.5 587.0Z" fill="#fff"/><path d="M1171.1 605.6 L1177.8 604.1 L1178.1 605.3 L1171.9 607.0Z" fill="#fff"/><path d="M1160.0 624.1 C1160.9 623.2 1163.2 622.7 1164.4 621.9 C1165.7 621.0 1165.9 619.6 1167.4 618.9 C1168.9 618.1 1171.4 618.0 1173.3 617.4 C1175.3 616.8 1177.5 616.2 1179.3 615.2 C1181.0 614.2 1182.2 613.1 1183.7 611.5 C1185.2 609.9 1186.9 607.4 1188.1 605.6 C1189.4 603.7 1189.9 601.7 1191.1 600.4 C1192.3 599.0 1193.3 597.9 1195.6 597.4 C1197.8 596.9 1202.5 597.9 1204.4 597.4 C1206.4 596.9 1205.7 594.8 1207.4 594.4 C1209.1 594.1 1212.8 594.8 1214.8 595.2 C1216.8 595.6 1217.3 596.0 1219.3 596.7 C1221.2 597.3 1224.2 598.6 1226.7 598.9 C1229.1 599.1 1231.9 598.5 1234.1 598.1 C1236.3 597.8 1238.8 597.5 1240.0 596.7 C1241.2 595.8 1240.5 593.7 1241.5 593.0 C1242.5 592.2 1244.2 591.9 1245.9 592.2 C1247.7 592.6 1249.9 594.4 1251.9 595.2 C1253.8 595.9 1255.8 595.9 1257.8 596.7 C1259.8 597.4 1262.2 598.4 1263.7 599.6 C1265.2 600.9 1265.8 602.2 1266.7 604.1 C1267.5 605.9 1268.9 608.8 1268.9 610.7 C1268.9 612.7 1266.7 614.6 1266.7 615.9 C1266.7 617.3 1268.0 617.4 1268.9 618.9 C1269.8 620.4 1271.6 623.2 1271.9 624.8 C1272.1 626.4 1271.1 628.3 1270.4 628.5 C1269.6 628.8 1268.1 627.4 1267.4 626.3 C1266.7 625.2 1266.8 623.1 1265.9 621.9 C1265.1 620.6 1263.8 619.5 1262.2 618.9 C1260.6 618.3 1258.0 617.9 1256.3 618.1 C1254.6 618.4 1252.1 619.5 1251.9 620.4 C1251.6 621.2 1253.6 622.6 1254.8 623.3 C1256.0 624.1 1258.9 624.0 1259.3 624.8 C1259.6 625.7 1256.8 627.0 1257.0 628.5 C1257.3 630.0 1259.6 631.9 1260.7 633.7 C1261.9 635.6 1263.3 637.4 1263.7 639.6 C1264.1 641.9 1263.7 645.1 1263.0 647.0 C1262.2 649.0 1260.6 650.0 1259.3 651.5 C1257.9 653.0 1256.5 654.7 1254.8 655.9 C1253.1 657.2 1250.6 658.1 1248.9 658.9 C1247.2 659.6 1245.4 660.6 1244.4 660.4 C1243.5 660.1 1243.6 657.4 1243.0 657.4 C1242.3 657.4 1240.9 659.4 1240.7 660.4 C1240.6 661.4 1241.5 662.1 1242.2 663.3 C1243.0 664.6 1244.3 666.3 1245.2 667.8 C1246.0 669.3 1247.2 670.7 1247.4 672.2 C1247.7 673.7 1247.4 675.4 1246.7 676.7 C1245.9 677.9 1244.1 678.9 1243.0 679.6 C1241.9 680.4 1241.1 681.6 1240.0 681.1 C1238.9 680.6 1237.4 678.1 1236.3 676.7 C1235.2 675.2 1234.3 673.7 1233.3 672.2 C1232.3 670.7 1231.2 667.8 1230.4 667.8 C1229.5 667.8 1228.4 670.5 1228.1 672.2 C1227.9 674.0 1228.4 676.2 1228.9 678.1 C1229.4 680.1 1230.5 682.1 1231.1 684.1 C1231.7 686.0 1231.3 687.9 1232.6 690.0 C1233.9 692.1 1238.3 695.6 1239.0 696.8 C1239.8 698.1 1237.9 698.3 1236.9 697.5 C1236.0 696.7 1234.6 694.0 1233.5 691.9 C1232.3 689.9 1230.9 687.5 1230.0 685.0 C1229.1 682.5 1228.5 679.4 1227.9 676.7 C1227.3 673.9 1227.6 670.2 1226.5 668.3 C1225.5 666.5 1222.9 666.7 1221.7 665.6 C1220.4 664.4 1218.5 660.8 1218.9 661.4 C1219.2 662.0 1223.4 668.9 1223.7 669.3 C1224.0 669.6 1222.0 665.3 1220.7 663.3 C1219.5 661.4 1217.8 658.9 1216.3 657.4 C1214.8 655.9 1213.3 654.7 1211.9 654.4 C1210.4 654.2 1208.9 654.9 1207.4 655.9 C1205.9 656.9 1204.4 658.6 1203.0 660.4 C1201.5 662.1 1199.6 665.4 1198.5 666.3 C1197.5 667.2 1197.4 664.8 1196.7 665.6 C1195.9 666.4 1194.5 669.0 1193.9 671.1 C1193.3 673.2 1193.9 676.0 1193.2 678.1 C1192.5 680.1 1191.0 684.1 1189.7 683.6 C1188.4 683.1 1186.8 678.3 1185.6 675.3 C1184.3 672.3 1183.3 668.5 1182.1 665.6 C1180.8 662.6 1180.3 659.3 1178.1 657.5 C1175.8 655.6 1171.5 655.8 1168.6 654.3 C1165.7 652.9 1163.1 650.1 1160.8 648.8 C1158.4 647.5 1156.3 647.1 1154.5 646.5 C1152.6 645.8 1151.1 644.5 1149.7 644.9 C1148.4 645.3 1147.6 647.6 1146.6 648.8 C1145.5 650.0 1144.5 652.0 1143.5 652.0 C1142.4 652.0 1141.6 650.5 1140.3 648.8 C1139.0 647.1 1136.9 644.0 1135.6 641.7 C1134.3 639.5 1133.5 637.4 1132.4 635.5 C1131.4 633.5 1130.3 631.8 1129.3 629.9 C1128.2 628.1 1126.5 625.9 1126.1 624.4 C1125.8 623.0 1124.6 621.7 1126.9 621.3 C1129.2 620.9 1137.5 622.3 1140.0 622.2 C1142.5 622.2 1140.7 621.1 1142.2 621.1 C1143.7 621.1 1146.9 621.5 1148.9 622.2 C1150.9 623.0 1152.8 624.7 1154.4 625.6 C1156.1 626.4 1158.0 627.5 1158.9 627.2 C1159.8 627.0 1159.1 625.0 1160.0 624.1Z" fill="#fdc82f"/><path d="M1285.9 610.0 L1290.4 610.7 L1288.9 613.0 L1285.9 612.7Z" fill="#fdc82f"/><path d="M1286.7 615.6 C1287.4 615.3 1290.6 616.8 1291.6 618.3 C1292.5 619.8 1292.9 623.0 1292.6 624.8 C1292.3 626.6 1291.0 627.9 1289.8 629.0 C1288.5 630.0 1286.8 630.6 1285.2 631.3 C1283.6 632.0 1281.7 632.6 1280.3 633.1 C1278.9 633.7 1277.3 634.9 1276.7 634.6 C1276.2 634.2 1276.1 632.2 1277.0 631.0 C1278.0 629.9 1280.7 628.9 1282.4 627.8 C1284.0 626.7 1286.0 625.8 1286.8 624.5 C1287.7 623.2 1287.4 621.6 1287.4 620.1 C1287.4 618.6 1286.0 615.9 1286.7 615.6Z" fill="#fdc82f"/><path d="M1227.4 669.3 C1227.9 668.0 1230.2 667.5 1231.1 668.5 C1232.0 669.5 1232.1 672.6 1232.6 675.2 C1233.1 677.8 1233.6 681.6 1234.1 684.1 C1234.6 686.5 1235.9 689.0 1235.6 690.0 C1235.2 691.0 1232.8 691.2 1231.9 690.0 C1230.9 688.8 1230.5 684.9 1229.9 682.6 C1229.4 680.2 1228.9 678.1 1228.4 675.9 C1228.0 673.7 1227.0 670.5 1227.4 669.3Z" fill="#fdc82f"/><path d="M1227.9 673.9 C1228.5 673.1 1230.7 672.0 1231.7 673.2 C1232.7 674.4 1233.0 678.1 1233.9 680.8 C1234.8 683.6 1236.3 687.2 1237.2 689.9 C1238.1 692.5 1239.5 695.5 1239.4 696.8 C1239.4 698.1 1237.9 698.6 1236.9 697.8 C1235.9 697.0 1234.6 694.1 1233.5 691.9 C1232.3 689.8 1230.9 687.3 1230.0 685.0 C1229.1 682.7 1228.7 679.9 1228.3 678.1 C1228.0 676.2 1227.4 674.7 1227.9 673.9Z" fill="#fdc82f"/><path d="M1277.0 632.2 L1280.0 633.7 L1278.5 635.9 L1276.7 634.9Z" fill="#fdc82f"/><path d="M1265.5 648.5 L1267.0 649.3 L1266.1 653.7 L1264.9 652.2Z" fill="#fdc82f"/><path d="M1266.8 663.5 C1267.3 662.5 1269.6 663.1 1270.3 664.2 C1271.0 665.2 1270.3 667.9 1271.0 669.7 C1271.7 671.6 1273.1 673.4 1274.4 675.3 C1275.8 677.1 1278.4 678.9 1279.3 680.8 C1280.2 682.8 1280.3 685.9 1280.0 687.1 C1279.7 688.2 1278.1 688.6 1277.2 687.8 C1276.3 687.0 1275.5 684.1 1274.4 682.2 C1273.4 680.4 1272.1 678.8 1271.0 676.7 C1269.8 674.6 1268.2 671.9 1267.5 669.7 C1266.8 667.5 1266.3 664.4 1266.8 663.5Z" fill="#fdc82f"/><path d="M1194.6 682.2 L1197.4 684.3 L1196.7 688.5 L1195.0 687.8Z" fill="#fdc82f"/><path d="M1223.8 689.9 C1223.9 689.3 1226.2 689.6 1227.9 691.2 C1229.7 692.9 1232.1 696.8 1234.2 699.6 C1236.2 702.4 1239.1 705.8 1240.4 707.9 C1241.7 710.0 1242.0 711.5 1241.8 712.1 C1241.6 712.7 1240.5 712.9 1239.0 711.4 C1237.5 709.9 1234.7 705.8 1232.8 703.1 C1230.8 700.3 1228.7 696.9 1227.2 694.7 C1225.7 692.5 1223.6 690.4 1223.8 689.9Z" fill="#fdc82f"/><path d="M1242.5 713.5 C1243.2 713.2 1246.9 714.3 1249.4 714.9 C1252.0 715.4 1255.0 716.2 1257.8 716.9 C1260.6 717.6 1263.3 718.6 1266.1 719.0 C1268.9 719.5 1272.1 719.7 1274.4 719.7 C1276.8 719.7 1279.8 718.7 1280.0 719.0 C1280.2 719.4 1278.1 721.5 1275.8 721.8 C1273.5 722.2 1269.6 721.7 1266.1 721.1 C1262.6 720.5 1258.5 719.1 1255.0 718.3 C1251.5 717.5 1247.4 717.1 1245.3 716.2 C1243.2 715.4 1241.8 713.7 1242.5 713.5Z" fill="#fdc82f"/><path d="M1249.4 698.9 C1250.1 697.4 1252.5 695.8 1254.3 694.0 C1256.2 692.3 1258.6 689.3 1260.6 688.5 C1262.5 687.7 1265.3 688.1 1266.1 689.2 C1266.9 690.2 1265.9 692.6 1265.4 694.7 C1265.0 696.8 1264.4 699.6 1263.3 701.7 C1262.3 703.8 1260.8 706.3 1259.2 707.2 C1257.5 708.1 1255.1 707.9 1253.6 707.2 C1252.1 706.5 1250.8 704.4 1250.1 703.1 C1249.4 701.7 1248.8 700.4 1249.4 698.9Z" fill="#fdc82f"/><path d="M1268.2 703.1 C1269.4 702.0 1273.8 700.7 1274.4 701.0 C1275.1 701.2 1272.6 702.7 1272.4 704.4 C1272.1 706.2 1273.3 710.8 1273.1 711.4 C1272.8 712.0 1271.7 707.9 1271.0 707.9 C1270.3 707.9 1269.5 711.5 1268.9 711.4 C1268.3 711.3 1267.6 708.6 1267.5 707.2 C1267.4 705.8 1267.0 704.1 1268.2 703.1Z" fill="#fdc82f"/><path d="M1289.7 702.4 C1290.4 701.9 1293.7 702.6 1295.3 703.1 C1296.9 703.5 1297.8 704.9 1299.4 705.1 C1301.1 705.4 1302.9 704.1 1305.0 704.4 C1307.1 704.8 1309.9 705.9 1311.9 707.2 C1314.0 708.5 1316.1 710.5 1317.5 712.1 C1318.9 713.7 1319.2 715.3 1320.3 716.9 C1321.3 718.6 1323.8 721.1 1323.8 721.8 C1323.8 722.5 1321.6 721.9 1320.3 721.1 C1319.0 720.3 1317.7 717.9 1316.1 716.9 C1314.5 716.0 1312.4 715.6 1310.6 715.6 C1308.7 715.6 1306.5 716.6 1305.0 716.9 C1303.5 717.3 1302.3 718.3 1301.5 717.6 C1300.7 716.9 1300.9 714.3 1300.1 712.8 C1299.3 711.3 1298.2 709.8 1296.7 708.6 C1295.2 707.5 1292.3 706.9 1291.1 705.8 C1290.0 704.8 1289.0 702.8 1289.7 702.4Z" fill="#fdc82f"/><path d="M1250.1 771.1 C1249.7 769.5 1251.9 766.0 1252.2 762.8 C1252.6 759.5 1251.8 754.4 1252.2 751.7 C1252.7 748.9 1253.1 747.7 1255.0 746.1 C1256.9 744.5 1260.8 743.3 1263.3 741.9 C1265.9 740.6 1268.2 739.4 1270.3 737.8 C1272.4 736.2 1273.5 733.6 1275.8 732.2 C1278.1 730.8 1282.3 730.6 1284.2 729.4 C1286.0 728.3 1285.1 725.9 1286.9 725.3 C1288.8 724.7 1293.4 725.5 1295.3 726.0 C1297.1 726.4 1297.8 727.0 1298.1 728.1 C1298.3 729.1 1296.0 730.7 1296.7 732.2 C1297.4 733.7 1300.6 736.6 1302.2 737.1 C1303.8 737.5 1305.3 736.3 1306.4 735.0 C1307.4 733.7 1307.9 731.3 1308.5 729.4 C1309.1 727.6 1309.3 723.7 1309.9 723.9 C1310.4 724.1 1311.2 728.5 1311.9 730.8 C1312.6 733.1 1313.1 735.7 1314.0 737.8 C1315.0 739.9 1316.3 741.2 1317.5 743.3 C1318.7 745.4 1320.2 748.2 1321.0 750.3 C1321.8 752.4 1322.5 753.8 1322.4 755.8 C1322.2 757.9 1321.4 760.5 1320.3 762.8 C1319.1 765.1 1317.3 767.6 1315.4 769.7 C1313.6 771.8 1311.4 773.7 1309.2 775.3 C1307.0 776.9 1304.5 778.5 1302.2 779.4 C1299.9 780.4 1297.2 780.8 1295.3 780.8 C1293.3 780.8 1291.3 780.6 1290.4 779.4 C1289.5 778.3 1290.5 775.3 1289.7 773.9 C1288.9 772.5 1286.2 772.0 1285.6 771.1 C1284.9 770.2 1286.9 769.3 1285.6 768.3 C1284.2 767.4 1280.0 765.8 1277.2 765.6 C1274.4 765.3 1271.7 766.2 1268.9 766.9 C1266.1 767.6 1262.9 768.8 1260.6 769.7 C1258.2 770.6 1256.7 772.3 1255.0 772.5 C1253.3 772.7 1250.6 772.7 1250.1 771.1Z" fill="#fdc82f"/><path d="M1293.2 786.4 L1299.4 785.7 L1297.4 789.2 L1294.6 790.8Z" fill="#fdc82f"/><path d="M1350.1 773.2 C1350.4 773.2 1350.8 776.9 1351.5 778.1 C1352.2 779.2 1354.3 779.4 1354.3 780.1 C1354.3 780.8 1352.8 781.3 1351.5 782.2 C1350.3 783.1 1347.9 785.0 1346.7 785.7 C1345.4 786.4 1343.7 787.0 1343.9 786.4 C1344.1 785.8 1347.1 783.6 1348.1 782.2 C1349.0 780.8 1349.4 779.6 1349.7 778.1 C1350.1 776.6 1349.8 773.2 1350.1 773.2Z" fill="#fdc82f"/><path d="M1341.8 785.7 C1342.7 785.6 1344.7 786.0 1343.9 787.1 C1343.1 788.1 1339.3 790.6 1336.9 791.9 C1334.6 793.3 1332.0 794.6 1330.0 795.4 C1328.0 796.2 1326.1 796.9 1325.1 796.8 C1324.2 796.7 1323.4 795.6 1324.4 794.7 C1325.5 793.8 1329.1 792.4 1331.4 791.2 C1333.7 790.1 1336.6 788.7 1338.3 787.8 C1340.1 786.9 1340.9 785.8 1341.8 785.7Z" fill="#fdc82f"/><path d="M1251.9 620.4 L1254.8 618.9 L1257.8 621.1 L1254.8 623.3Z" fill="#fff"/><path d="M1016.8 673.2 C1016.8 670.9 1018.2 665.3 1018.4 662.2 C1018.5 659.1 1016.9 657.0 1017.6 654.3 C1018.2 651.7 1020.5 648.8 1022.3 646.5 C1024.1 644.1 1026.8 642.4 1028.6 640.2 C1030.4 637.9 1031.2 635.1 1033.3 633.1 C1035.4 631.1 1038.0 629.6 1041.2 628.4 C1044.3 627.2 1048.3 626.5 1052.2 626.0 C1056.1 625.5 1062.2 624.2 1064.8 625.2 C1067.4 626.3 1067.7 629.8 1067.9 632.3 C1068.2 634.8 1066.5 637.6 1066.4 640.2 C1066.2 642.8 1065.8 646.1 1067.1 648.0 C1068.5 650.0 1071.5 650.8 1074.2 652.0 C1077.0 653.2 1080.9 653.9 1083.7 655.1 C1086.4 656.3 1088.9 658.9 1090.7 659.1 C1092.6 659.2 1092.7 656.5 1094.7 655.9 C1096.6 655.3 1099.7 655.5 1102.5 655.6 C1105.4 655.6 1109.9 655.4 1112.0 656.2 C1114.1 657.1 1114.1 659.1 1115.1 660.6 C1116.2 662.1 1117.1 663.6 1118.3 665.3 C1119.5 667.1 1120.8 669.1 1122.2 670.9 C1123.7 672.6 1125.8 674.1 1126.9 675.6 C1128.1 677.0 1127.8 679.1 1129.3 679.5 C1130.7 679.9 1133.6 678.3 1135.6 677.9 C1137.6 677.5 1140.4 676.2 1141.1 677.1 C1141.7 678.1 1140.6 681.2 1139.5 683.4 C1138.5 685.7 1136.5 688.0 1134.8 690.5 C1133.1 693.0 1131.3 695.8 1129.3 698.4 C1127.3 701.0 1124.7 703.9 1123.0 706.3 C1121.3 708.6 1119.6 710.2 1119.1 712.5 C1118.5 714.9 1119.3 717.8 1119.9 720.4 C1120.4 723.0 1122.1 725.9 1122.2 728.3 C1122.3 730.6 1122.1 732.7 1120.6 734.6 C1119.2 736.4 1115.4 737.7 1113.6 739.3 C1111.7 740.9 1110.3 742.2 1109.6 744.0 C1109.0 745.8 1110.3 748.1 1109.6 750.3 C1109.0 752.5 1107.4 755.0 1105.7 757.4 C1104.0 759.7 1101.5 762.5 1099.4 764.5 C1097.3 766.4 1095.7 768.0 1093.1 769.2 C1090.5 770.4 1085.9 771.9 1083.7 771.5 C1081.4 771.2 1081.0 769.3 1079.7 766.8 C1078.4 764.3 1076.8 759.6 1075.8 756.6 C1074.8 753.6 1074.5 751.6 1073.4 748.7 C1072.4 745.8 1070.0 742.4 1069.5 739.3 C1069.0 736.1 1069.8 732.5 1070.3 729.9 C1070.8 727.2 1072.8 725.9 1072.7 723.6 C1072.5 721.2 1070.7 718.3 1069.5 715.7 C1068.3 713.1 1066.5 710.4 1065.6 707.8 C1064.7 705.2 1064.0 702.6 1064.0 700.0 C1064.0 697.3 1066.0 694.1 1065.6 692.1 C1065.2 690.1 1063.1 688.8 1061.6 688.2 C1060.2 687.5 1059.3 687.9 1056.9 688.2 C1054.6 688.4 1050.4 689.3 1047.5 689.7 C1044.6 690.1 1042.1 690.4 1039.6 690.5 C1037.1 690.7 1034.6 691.3 1032.5 690.5 C1030.4 689.7 1028.9 687.5 1027.0 685.8 C1025.2 684.1 1023.0 681.9 1021.5 680.3 C1020.1 678.7 1019.2 677.5 1018.4 676.4 C1017.6 675.2 1016.8 675.6 1016.8 673.2Z" fill="#17a673"/><path d="M1126.1 745.6 C1126.4 742.7 1127.7 738.6 1129.3 736.1 C1130.9 733.7 1134.0 732.2 1135.6 730.6 C1137.2 729.1 1138.1 726.6 1138.7 726.7 C1139.4 726.8 1139.8 729.3 1139.5 731.4 C1139.3 733.5 1138.1 736.7 1137.2 739.3 C1136.2 741.9 1135.1 744.9 1134.0 747.2 C1133.0 749.4 1131.9 751.6 1130.9 752.7 C1129.8 753.7 1128.5 754.6 1127.7 753.5 C1126.9 752.3 1125.9 748.5 1126.1 745.6Z" fill="#17a673"/><path d="M1105.7 702.3 C1106.4 701.5 1108.8 700.4 1109.6 700.7 C1110.4 701.1 1110.8 703.6 1110.4 704.7 C1110.0 705.7 1108.1 706.9 1107.3 707.0 C1106.4 707.2 1105.6 706.3 1105.4 705.5 C1105.1 704.7 1105.0 703.1 1105.7 702.3Z" fill="#fff"/><path d="M1100.2 709.4 L1101.4 709.4 L1104.3 718.1 L1103.0 718.1Z" fill="#fff"/><path d="M1108.8 722.0 L1110.4 722.0 L1111.7 729.9 L1110.1 729.9Z" fill="#fff"/><path d="M1066.4 640.2 C1066.5 637.8 1066.6 634.8 1067.9 633.9 C1069.2 633.0 1071.6 634.1 1074.2 634.7 C1076.8 635.2 1081.6 637.2 1083.7 637.0 C1085.8 636.9 1085.0 634.1 1086.8 633.9 C1088.6 633.6 1092.1 634.7 1094.7 635.5 C1097.3 636.2 1100.4 637.9 1102.5 638.6 C1104.6 639.3 1106.3 638.7 1107.3 639.4 C1108.2 640.0 1107.5 641.1 1108.1 642.5 C1108.6 644.0 1109.5 645.8 1110.4 648.0 C1111.3 650.3 1113.3 654.5 1113.6 655.9 C1113.8 657.3 1113.8 656.3 1112.0 656.2 C1110.1 656.2 1105.4 655.6 1102.5 655.6 C1099.7 655.5 1096.6 655.3 1094.7 655.9 C1092.7 656.5 1092.6 659.2 1090.7 659.1 C1088.9 658.9 1086.4 656.3 1083.7 655.1 C1080.9 653.9 1077.0 653.2 1074.2 652.0 C1071.5 650.8 1068.5 650.0 1067.1 648.0 C1065.8 646.1 1066.2 642.5 1066.4 640.2Z" fill="#9b5a4a"/><path d="M1108.1 638.6 C1108.1 637.3 1109.5 635.3 1110.4 633.9 C1111.3 632.4 1112.0 631.4 1113.6 629.9 C1115.1 628.5 1117.8 626.1 1119.9 625.2 C1121.9 624.3 1124.6 623.7 1126.1 624.4 C1127.7 625.2 1128.2 628.1 1129.3 629.9 C1130.3 631.8 1131.4 633.5 1132.4 635.5 C1133.5 637.4 1134.3 639.5 1135.6 641.7 C1136.9 644.0 1139.0 647.1 1140.3 648.8 C1141.6 650.5 1142.4 652.0 1143.5 652.0 C1144.5 652.0 1145.3 648.8 1146.6 648.8 C1147.9 648.8 1149.9 650.8 1151.3 652.0 C1152.8 653.2 1155.3 654.5 1155.3 655.9 C1155.3 657.3 1153.0 659.1 1151.3 660.6 C1149.6 662.2 1147.4 663.8 1145.0 665.3 C1142.7 666.9 1139.8 668.6 1137.2 670.1 C1134.5 671.5 1131.0 674.0 1129.3 674.0 C1127.6 674.0 1128.0 672.0 1126.9 670.1 C1125.9 668.1 1124.4 664.8 1123.0 662.2 C1121.6 659.6 1119.7 657.0 1118.3 654.3 C1116.8 651.7 1115.7 648.6 1114.3 646.5 C1113.0 644.4 1111.5 643.1 1110.4 641.7 C1109.4 640.4 1108.1 639.9 1108.1 638.6Z" fill="#9b5a4a"/><path d="M839.6 421.8 V617" fill="none" stroke="#9a5f52" stroke-width="1"/><path d="M1006.6 421.8 V513.4 H1071 V616" fill="none" stroke="#7a8fc6" stroke-width="1"/><path d="M1321 399 V644.8 H1297.8 V706" fill="none" stroke="#ecd9a0" stroke-width="1.3"/><path d="M1008.8 891 V701.8 L1074.3 681.4" fill="none" stroke="#5f8f80" stroke-width="1"/><path d="M1167.8 885.3 V685.5 L1146.6 666" fill="none" stroke="#857575" stroke-width="1"/><text x="847.2" y="435.0" font-size="18" fill="#d9532c" font-weight="bold" letter-spacing="0.162" text-anchor="start">AMERICAS</text><text x="1013.0" y="435.0" font-size="18" fill="#0f75bc" font-weight="bold" letter-spacing="0.097" text-anchor="start">EUROPE</text><text x="1311.0" y="411.6" font-size="18" fill="#fdc82f" font-weight="bold" letter-spacing="0.104" text-anchor="end">ASIA AND</text><text x="1311.0" y="433.5" font-size="18" fill="#fdc82f" font-weight="bold" letter-spacing="0.167" text-anchor="end">THE PACIFIC</text><text x="1017.8" y="884.6" font-size="18" fill="#17a673" font-weight="bold" letter-spacing="-0.048" text-anchor="start">AFRICA</text><text x="1176.0" y="884.6" font-size="18" fill="#9b5a4a" font-weight="bold" letter-spacing="0.118" text-anchor="start">MIDDLE EAST</text><g transform="translate(854.8 459.0)" fill="#1d4f9c" stroke="#1d4f9c"><circle cx="1.6" cy="-6" r="1.7" stroke="none"/><path d="M1 -3.8 L-1 1.2 L-2.6 6.8 M-0.4 1 L2.4 3 L3.4 6.8 M0.6 -3 L4.2 -0.6 M0 -3 L-2.6 -0.4" fill="none" stroke-width="1.5" stroke-linecap="round"/><rect x="-6.6" y="1.6" width="3.4" height="4.6" rx=".6" stroke="none"/></g><g transform="translate(854.8 480.3)"><circle r="5.6" fill="none" stroke="#17a673" stroke-width="1.2"/><text x="0" y="3" font-size="8.500" font-weight="bold" fill="#17a673" text-anchor="middle">$</text></g><text stroke="#27477c" stroke-width="0.38" x="896.7" y="462.4" font-size="9.6" fill="#27477c" letter-spacing="0.293" text-anchor="start">219 million</text><text stroke="#27477c" stroke-width="0.38" x="970.5" y="462.4" font-size="9.6" fill="#27477c" letter-spacing="0.340" text-anchor="end">+2%</text><text stroke="#2a9c78" stroke-width="0.38" x="870.0" y="483.7" font-size="9.6" fill="#2a9c78" letter-spacing="0.010" text-anchor="start">USD</text><text stroke="#2a9c78" stroke-width="0.38" x="896.7" y="483.7" font-size="9.6" fill="#2a9c78" letter-spacing="0.292" text-anchor="start">342 billion</text><text stroke="#2a9c78" stroke-width="0.38" x="970.5" y="483.7" font-size="9.6" fill="#2a9c78" letter-spacing="0.340" text-anchor="end">+0%</text><g transform="translate(1021.9 459.5)" fill="#1d4f9c" stroke="#1d4f9c"><circle cx="1.6" cy="-6" r="1.7" stroke="none"/><path d="M1 -3.8 L-1 1.2 L-2.6 6.8 M-0.4 1 L2.4 3 L3.4 6.8 M0.6 -3 L4.2 -0.6 M0 -3 L-2.6 -0.4" fill="none" stroke-width="1.5" stroke-linecap="round"/><rect x="-6.6" y="1.6" width="3.4" height="4.6" rx=".6" stroke="none"/></g><g transform="translate(1021.9 481.0)"><circle r="5.6" fill="none" stroke="#17a673" stroke-width="1.2"/><text x="0" y="3" font-size="8.500" font-weight="bold" fill="#17a673" text-anchor="middle">$</text></g><text stroke="#27477c" stroke-width="0.38" x="1063.3" y="462.9" font-size="9.6" fill="#27477c" letter-spacing="0.293" text-anchor="start">744 million</text><text stroke="#27477c" stroke-width="0.38" x="1137.4" y="462.9" font-size="9.6" fill="#27477c" letter-spacing="0.340" text-anchor="end">+4%</text><text stroke="#2a9c78" stroke-width="0.38" x="1036.7" y="484.4" font-size="9.6" fill="#2a9c78" letter-spacing="0.010" text-anchor="start">USD</text><text stroke="#2a9c78" stroke-width="0.38" x="1063.3" y="484.4" font-size="9.6" fill="#2a9c78" letter-spacing="0.292" text-anchor="start">576 billion</text><text stroke="#2a9c78" stroke-width="0.38" x="1137.4" y="484.4" font-size="9.6" fill="#2a9c78" letter-spacing="0.340" text-anchor="end">+4%</text><g transform="translate(1193.4 459.5)" fill="#1d4f9c" stroke="#1d4f9c"><circle cx="1.6" cy="-6" r="1.7" stroke="none"/><path d="M1 -3.8 L-1 1.2 L-2.6 6.8 M-0.4 1 L2.4 3 L3.4 6.8 M0.6 -3 L4.2 -0.6 M0 -3 L-2.6 -0.4" fill="none" stroke-width="1.5" stroke-linecap="round"/><rect x="-6.6" y="1.6" width="3.4" height="4.6" rx=".6" stroke="none"/></g><g transform="translate(1193.4 481.0)"><circle r="5.6" fill="none" stroke="#17a673" stroke-width="1.2"/><text x="0" y="3" font-size="8.500" font-weight="bold" fill="#17a673" text-anchor="middle">$</text></g><text stroke="#27477c" stroke-width="0.38" x="1236.3" y="462.9" font-size="9.6" fill="#27477c" letter-spacing="0.293" text-anchor="start">362 million</text><text stroke="#27477c" stroke-width="0.38" x="1310.5" y="462.9" font-size="9.6" fill="#27477c" letter-spacing="0.340" text-anchor="end">+4%</text><text stroke="#2a9c78" stroke-width="0.38" x="1209.5" y="484.4" font-size="9.6" fill="#2a9c78" letter-spacing="0.010" text-anchor="start">USD</text><text stroke="#2a9c78" stroke-width="0.38" x="1236.3" y="484.4" font-size="9.6" fill="#2a9c78" letter-spacing="0.292" text-anchor="start">443 billion</text><text stroke="#2a9c78" stroke-width="0.38" x="1310.5" y="484.4" font-size="9.6" fill="#2a9c78" letter-spacing="0.340" text-anchor="end">+1%</text><g transform="translate(1024.4 828.8)" fill="#1d4f9c" stroke="#1d4f9c"><circle cx="1.6" cy="-6" r="1.7" stroke="none"/><path d="M1 -3.8 L-1 1.2 L-2.6 6.8 M-0.4 1 L2.4 3 L3.4 6.8 M0.6 -3 L4.2 -0.6 M0 -3 L-2.6 -0.4" fill="none" stroke-width="1.5" stroke-linecap="round"/><rect x="-6.6" y="1.6" width="3.4" height="4.6" rx=".6" stroke="none"/></g><g transform="translate(1024.4 851.0)"><circle r="5.6" fill="none" stroke="#17a673" stroke-width="1.2"/><text x="0" y="3" font-size="8.500" font-weight="bold" fill="#17a673" text-anchor="middle">$</text></g><text stroke="#27477c" stroke-width="0.38" x="1068.7" y="832.2" font-size="9.6" fill="#27477c" letter-spacing="0.323" text-anchor="start">70 million</text><text stroke="#27477c" stroke-width="0.38" x="1137.4" y="832.2" font-size="9.6" fill="#27477c" letter-spacing="0.340" text-anchor="end">+2%</text><text stroke="#2a9c78" stroke-width="0.38" x="1042.0" y="854.4" font-size="9.6" fill="#2a9c78" letter-spacing="0.010" text-anchor="start">USD</text><text stroke="#2a9c78" stroke-width="0.38" x="1068.7" y="854.4" font-size="9.6" fill="#2a9c78" letter-spacing="0.321" text-anchor="start">38 billion</text><text stroke="#2a9c78" stroke-width="0.38" x="1137.4" y="854.4" font-size="9.6" fill="#2a9c78" letter-spacing="0.340" text-anchor="end">+1%</text><g transform="translate(1183.0 828.8)" fill="#1d4f9c" stroke="#1d4f9c"><circle cx="1.6" cy="-6" r="1.7" stroke="none"/><path d="M1 -3.8 L-1 1.2 L-2.6 6.8 M-0.4 1 L2.4 3 L3.4 6.8 M0.6 -3 L4.2 -0.6 M0 -3 L-2.6 -0.4" fill="none" stroke-width="1.5" stroke-linecap="round"/><rect x="-6.6" y="1.6" width="3.4" height="4.6" rx=".6" stroke="none"/></g><g transform="translate(1183.0 851.0)"><circle r="5.6" fill="none" stroke="#17a673" stroke-width="1.2"/><text x="0" y="3" font-size="8.500" font-weight="bold" fill="#17a673" text-anchor="middle">$</text></g><text stroke="#27477c" stroke-width="0.38" x="1228.0" y="832.2" font-size="9.6" fill="#27477c" letter-spacing="0.323" text-anchor="start">65 million</text><text stroke="#27477c" stroke-width="0.38" x="1296.8" y="832.2" font-size="9.6" fill="#27477c" letter-spacing="0.340" text-anchor="end">+8%</text><text stroke="#2a9c78" stroke-width="0.38" x="1201.0" y="854.4" font-size="9.6" fill="#2a9c78" letter-spacing="0.010" text-anchor="start">USD</text><text stroke="#2a9c78" stroke-width="0.38" x="1228.0" y="854.4" font-size="9.6" fill="#2a9c78" letter-spacing="0.321" text-anchor="start">81 billion</text><text stroke="#2a9c78" stroke-width="0.38" x="1296.8" y="854.4" font-size="9.6" fill="#2a9c78" letter-spacing="0.340" text-anchor="end">+8%</text></svg>
</div></body></html>
